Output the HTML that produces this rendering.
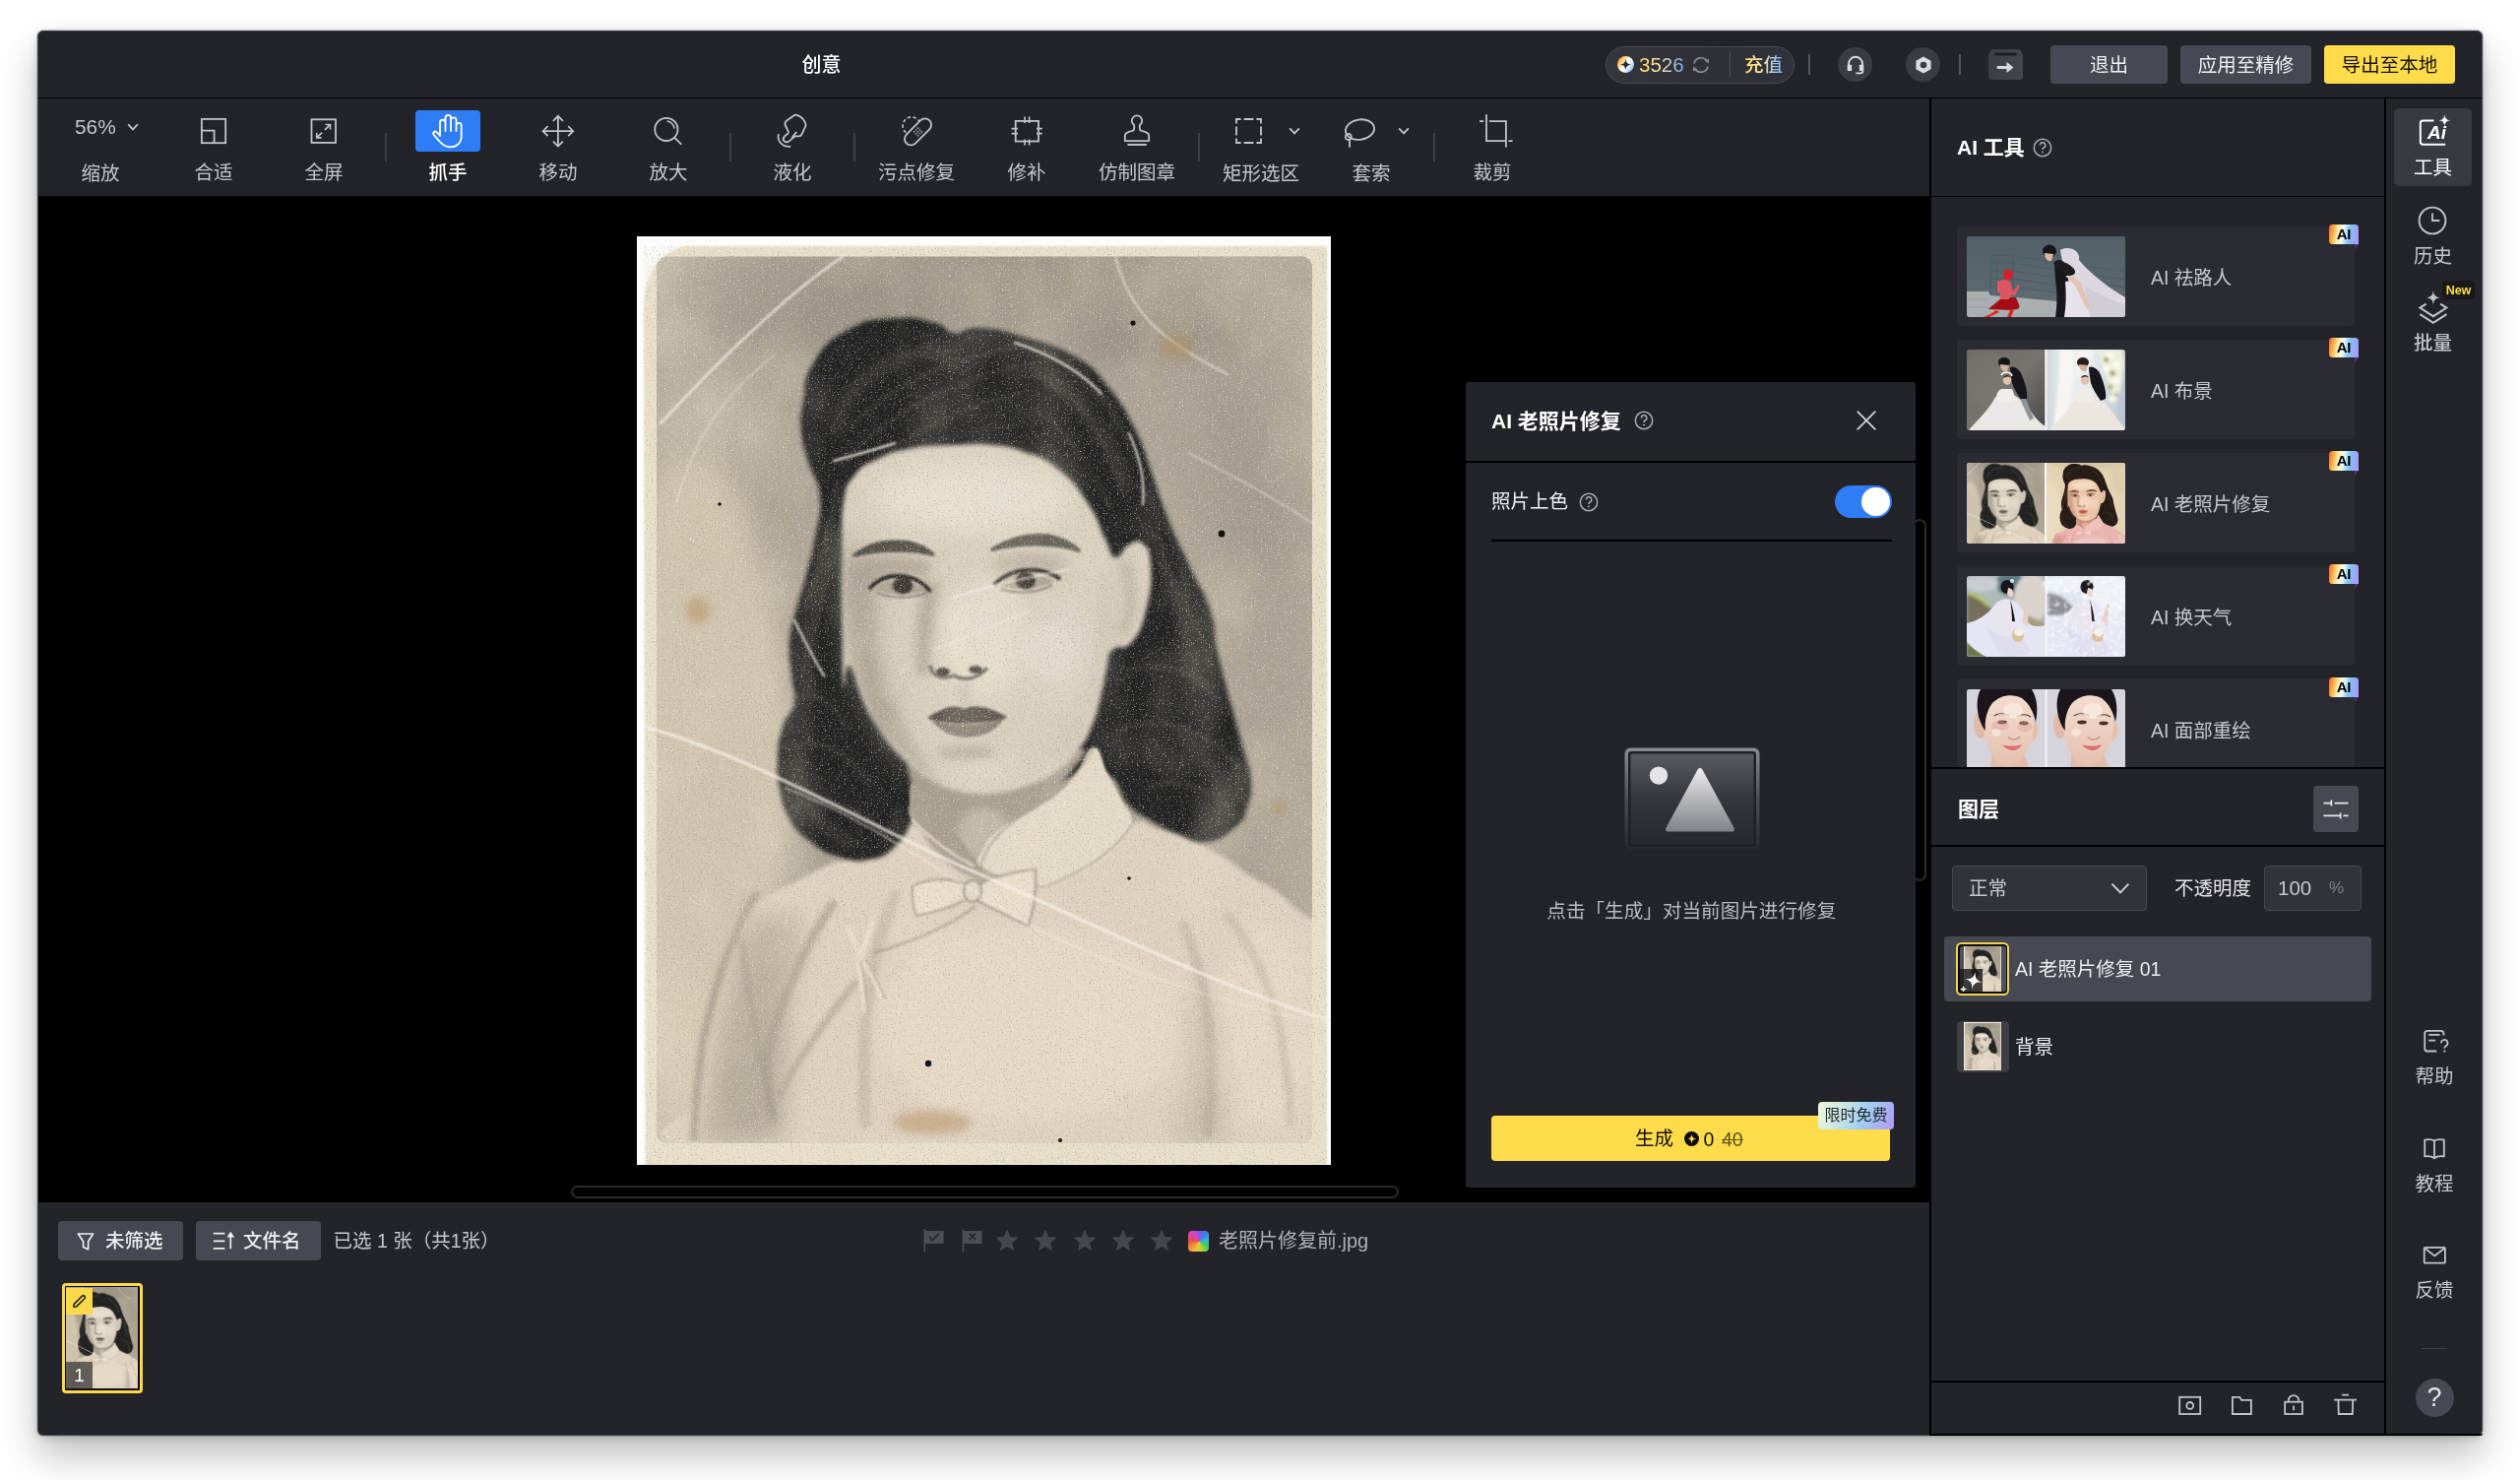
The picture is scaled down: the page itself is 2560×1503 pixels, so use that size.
<!DOCTYPE html>
<html lang="zh-CN"><head><meta charset="utf-8"><title>创意</title>
<style>
html,body{margin:0;padding:0;}
body{width:2560px;height:1503px;background:#fff;position:relative;overflow:hidden;
font-family:"Liberation Sans","Noto Sans CJK SC",sans-serif;}
.a{position:absolute;box-sizing:border-box;}
.t{white-space:nowrap;}
svg{display:block;overflow:visible;}
.gt{background:linear-gradient(90deg,#ffe27a 0%,#fbe9a8 45%,#7fb6ff 100%);-webkit-background-clip:text;background-clip:text;color:transparent !important;}
#root{position:absolute;left:0;top:0;width:2560px;height:1503px;will-change:transform;}
</style></head><body><div id="root">
<svg width="0" height="0" style="position:absolute"><defs>
<filter id="pb1" x="-10%" y="-10%" width="120%" height="120%"><feGaussianBlur stdDeviation="0.9"/></filter>
<filter id="pb2" x="-10%" y="-10%" width="120%" height="120%"><feGaussianBlur stdDeviation="2"/></filter>
<filter id="pb4" x="-20%" y="-20%" width="140%" height="140%"><feGaussianBlur stdDeviation="5"/></filter>
<filter id="pb9" x="-40%" y="-40%" width="180%" height="180%"><feGaussianBlur stdDeviation="13"/></filter>
<filter id="grain" x="0" y="0" width="100%" height="100%"><feTurbulence type="fractalNoise" baseFrequency="0.7" numOctaves="2" seed="7" result="n"/>
<feColorMatrix in="n" type="matrix" values="0 0 0 0 0.95  0 0 0 0 0.92  0 0 0 0 0.85  3.2 3.2 0 0 -3.55"/></filter>
<filter id="graind" x="0" y="0" width="100%" height="100%"><feTurbulence type="fractalNoise" baseFrequency="0.6" numOctaves="2" seed="23" result="n"/>
<feColorMatrix in="n" type="matrix" values="0 0 0 0 0.2  0 0 0 0 0.19  0 0 0 0 0.17  2.4 2.4 0 0 -2.6"/></filter>
<filter id="stain" x="0" y="0" width="100%" height="100%"><feTurbulence type="fractalNoise" baseFrequency="0.011 0.008" numOctaves="3" seed="11" result="n"/>
<feColorMatrix in="n" type="matrix" values="0 0 0 0 0.88  0 0 0 0 0.8  0 0 0 0 0.64  2.2 1.6 0 0 -1.72"/></filter>
<clipPath id="pclip"><rect x="0" y="0" width="705" height="943"/></clipPath>
<clipPath id="pinner"><rect x="20" y="20.5" width="666" height="900.5" rx="11"/></clipPath>
<radialGradient id="vign" cx="0.5" cy="0.46" r="0.66"><stop offset="0.7" stop-color="#e9e0cc" stop-opacity="0"/><stop offset="1" stop-color="#ece3cf" stop-opacity="0.28"/></radialGradient>
</defs></svg>
<svg width="0" height="0" style="position:absolute"><defs>
<filter id="tb1" x="-10%" y="-10%" width="120%" height="120%"><feGaussianBlur stdDeviation="0.6"/></filter>
<filter id="tb2" x="-20%" y="-20%" width="140%" height="140%"><feGaussianBlur stdDeviation="1.5"/></filter>
<filter id="tb4" x="-30%" y="-30%" width="160%" height="160%"><feGaussianBlur stdDeviation="3.5"/></filter>
<filter id="tnoise" x="0" y="0" width="100%" height="100%"><feTurbulence type="fractalNoise" baseFrequency="0.22" numOctaves="2" seed="3"/><feColorMatrix type="matrix" values="0 0 0 0 1  0 0 0 0 1  0 0 0 0 1  2.4 2.4 0 0 -2.3"/></filter>
<linearGradient id="c1wall" x1="0" y1="0" x2="0" y2="1"><stop offset="0" stop-color="#525f66"/><stop offset="1" stop-color="#626d73"/></linearGradient>
<linearGradient id="c2l" x1="0" y1="0" x2="1" y2="1"><stop offset="0" stop-color="#6a6864"/><stop offset="0.5" stop-color="#77746f"/><stop offset="1" stop-color="#4a4946"/></linearGradient>
<linearGradient id="c2r" x1="0" y1="0" x2="1" y2="0"><stop offset="0" stop-color="#cfd6dc"/><stop offset="0.25" stop-color="#eef0f1"/><stop offset="0.6" stop-color="#e3e8ed"/><stop offset="1" stop-color="#b7c2cf"/></linearGradient>
<linearGradient id="skin5" x1="0" y1="0" x2="0" y2="1"><stop offset="0" stop-color="#f3ddd0"/><stop offset="1" stop-color="#e6c0ae"/></linearGradient>
</defs></svg>
<div class="a" style="left:38px;top:31px;width:2484px;height:1427px;background:#23242a;border-radius:6px;box-shadow:inset 0 0 0 1px rgba(120,126,146,.32),0 20px 38px rgba(0,0,0,.26),0 0 2px rgba(0,0,0,.5),0 2px 10px rgba(0,0,0,.15);"></div>
<div class="a t" style="left:534.6px;width:600px;text-align:center;top:50.5px;height:30px;line-height:30px;font-size:20px;color:#fff;font-weight:500;">创意</div>
<div class="a" style="left:39px;top:98.6px;width:2482px;height:1.7px;background:#000;"></div>
<div class="a" style="left:1631px;top:47px;width:192px;height:38px;border-radius:19px;background:linear-gradient(90deg,#34363d,#2e3038 60%,#31323b);border:1.5px solid #484a52;"></div>
<svg class="a" style="left:1641.5px;top:56.0px;" width="19.0" height="19.0" viewBox="-9.5 -9.5 19.0 19.0" fill="none"><defs><linearGradient id="coing" x1="0" y1="0.15" x2="1" y2="0.85">
<stop offset="0" stop-color="#ff8f1f"/><stop offset="0.22" stop-color="#ffc66b"/><stop offset="0.5" stop-color="#ffffff"/><stop offset="0.72" stop-color="#dcebfb"/><stop offset="1" stop-color="#4e9df0"/></linearGradient></defs>
<circle r="8.5" fill="url(#coing)"/>
<path d="M0,-5.6 C0.7,-1.8 1.8,-0.7 5.6,0 C1.8,0.7 0.7,1.8 0,5.6 C-0.7,1.8 -1.8,0.7 -5.6,0 C-1.8,-0.7 -0.7,-1.8 0,-5.6Z" fill="#2a2b33"/></svg>
<div class="a t" style="left:1665px;top:50.5px;height:30px;line-height:30px;font-size:20.5px;color:#ffe27a;font-weight:400;background:linear-gradient(90deg,#ffd964 0%,#fbe7a6 45%,#6fb0ff 100%);-webkit-background-clip:text;background-clip:text;color:transparent;">3526</div>
<svg class="a" style="left:1717.0px;top:55.0px;" width="22" height="22" viewBox="-11.0 -11.0 22 22" fill="none"><path d="M-7,-1.5 A7.1,7.1 0 0 1 6.2,-3.5" stroke="#8b8d93" stroke-width="1.7" fill="none" /><path d="M7,1.5 A7.1,7.1 0 0 1 -6.2,3.5" stroke="#8b8d93" stroke-width="1.7" fill="none" />
<path d="M3.6,-4.2 L8,-6.4 L7.8,-1.4Z" fill="#8b8d93"/><path d="M-3.6,4.2 L-8,6.4 L-7.8,1.4Z" fill="#8b8d93"/></svg>
<div class="a" style="left:1756.5px;top:52px;width:1.5px;height:27px;background:#4a4c54;"></div>
<div class="a t" style="left:1772px;top:50.5px;height:30px;line-height:30px;font-size:19.5px;color:#ffe27a;font-weight:500;background:linear-gradient(90deg,#ffd964 0%,#fbe7a6 45%,#6fb0ff 100%);-webkit-background-clip:text;background-clip:text;color:transparent;">充值</div>
<div class="a" style="left:1837px;top:55px;width:1.5px;height:21px;background:#55575e;"></div>
<div class="a" style="left:1867px;top:48px;width:35px;height:35px;border-radius:50%;background:#3a3c44;"></div>
<svg class="a" style="left:1872.5px;top:53.5px;" width="24" height="24" viewBox="-12.0 -12.0 24 24" fill="none"><path d="M-7,1 V-1.2 A7,7 0 0 1 7,-1.2 V1" stroke="#dcdcdf" stroke-width="1.9" fill="none" />
<rect x="-8.3" y="-0.3" width="4.4" height="6.2" rx="0.6" fill="#dcdcdf"/><rect x="3.9" y="-0.3" width="4.4" height="6.2" rx="0.6" fill="#dcdcdf"/>
<path d="M7.3,5 V6.3 A2,2 0 0 1 5.3,8.3 H0.4" stroke="#dcdcdf" stroke-width="1.7" fill="none" /></svg>
<div class="a" style="left:1936px;top:48px;width:35px;height:35px;border-radius:50%;background:#3a3c44;"></div>
<svg class="a" style="left:1941.5px;top:53.5px;" width="24" height="24" viewBox="-12.0 -12.0 24 24" fill="none"><path fill-rule="evenodd" fill="#dcdcdf" d="M0,-8.6 L7.6,-4.3 V4.3 L0,8.6 L-7.6,4.3 V-4.3Z M3.3,0 A3.3,3.3 0 1 0 -3.3,0 A3.3,3.3 0 1 0 3.3,0Z"/></svg>
<div class="a" style="left:1990px;top:55px;width:1.5px;height:21px;background:#55575e;"></div>
<svg class="a" style="left:2020px;top:50px" width="35" height="31" viewBox="0 0 35 31"><defs><linearGradient id="exg" x1="0" x2="1"><stop offset="0" stop-color="#3d3e44"/><stop offset="1" stop-color="#43454f"/></linearGradient></defs>
<path d="M5,0 H30 Q32,0 33,2 L35,6 V28 Q35,31 32,31 H3 Q0,31 0,28 V6 L2,2 Q3,0 5,0Z" fill="url(#exg)"/>
<rect x="6" y="3.4" width="22.6" height="3.2" rx="1.4" fill="#1f2025"/>
<path d="M8.8,16.9 H18.5 V13 L25.6,18.5 L18.5,24 V20.1 H8.8Z" fill="#d8d8da"/></svg>
<div class="a" style="left:2083px;top:46px;width:119px;height:39px;background:#464852;border-radius:4px;"></div>
<div class="a t" style="left:1842.5px;width:600px;text-align:center;top:50.5px;height:30px;line-height:30px;font-size:19.5px;color:#f0f0f2;font-weight:400;">退出</div>
<div class="a" style="left:2215px;top:46px;width:133px;height:39px;background:#464852;border-radius:4px;"></div>
<div class="a t" style="left:1981.5px;width:600px;text-align:center;top:50.5px;height:30px;line-height:30px;font-size:19.5px;color:#f0f0f2;font-weight:400;">应用至精修</div>
<div class="a" style="left:2361px;top:46px;width:133px;height:39px;background:#ffdc4a;border-radius:4px;"></div>
<div class="a t" style="left:2127.5px;width:600px;text-align:center;top:50.5px;height:30px;line-height:30px;font-size:19.5px;color:#111;font-weight:400;">导出至本地</div>
<div class="a" style="left:391.25px;top:135px;width:1.5px;height:29px;background:#3e4047;"></div>
<div class="a" style="left:741.25px;top:135px;width:1.5px;height:29px;background:#3e4047;"></div>
<div class="a" style="left:867.25px;top:135px;width:1.5px;height:29px;background:#3e4047;"></div>
<div class="a" style="left:1217.25px;top:135px;width:1.5px;height:29px;background:#3e4047;"></div>
<div class="a" style="left:1456.25px;top:135px;width:1.5px;height:29px;background:#3e4047;"></div>
<div class="a" style="left:422px;top:112px;width:66px;height:42px;background:#2f7df6;border-radius:4px;"></div>
<div class="a t" style="left:-198px;width:600px;text-align:center;top:161.3px;height:30px;line-height:30px;font-size:19.5px;color:#c6c7cb;font-weight:400;">缩放</div>
<div class="a t" style="left:-83px;width:600px;text-align:center;top:160.0px;height:30px;line-height:30px;font-size:19.5px;color:#c6c7cb;font-weight:400;">合适</div>
<div class="a t" style="left:29px;width:600px;text-align:center;top:160.0px;height:30px;line-height:30px;font-size:19.5px;color:#c6c7cb;font-weight:400;">全屏</div>
<div class="a t" style="left:155px;width:600px;text-align:center;top:160.0px;height:30px;line-height:30px;font-size:19.5px;color:#fff;font-weight:500;">抓手</div>
<div class="a t" style="left:267px;width:600px;text-align:center;top:160.0px;height:30px;line-height:30px;font-size:19.5px;color:#c6c7cb;font-weight:400;">移动</div>
<div class="a t" style="left:379px;width:600px;text-align:center;top:160.0px;height:30px;line-height:30px;font-size:19.5px;color:#c6c7cb;font-weight:400;">放大</div>
<div class="a t" style="left:505px;width:600px;text-align:center;top:160.0px;height:30px;line-height:30px;font-size:19.5px;color:#c6c7cb;font-weight:400;">液化</div>
<div class="a t" style="left:631px;width:600px;text-align:center;top:160.0px;height:30px;line-height:30px;font-size:19.5px;color:#c6c7cb;font-weight:400;">污点修复</div>
<div class="a t" style="left:743px;width:600px;text-align:center;top:160.0px;height:30px;line-height:30px;font-size:19.5px;color:#c6c7cb;font-weight:400;">修补</div>
<div class="a t" style="left:855px;width:600px;text-align:center;top:160.0px;height:30px;line-height:30px;font-size:19.5px;color:#c6c7cb;font-weight:400;">仿制图章</div>
<div class="a t" style="left:981px;width:600px;text-align:center;top:161.3px;height:30px;line-height:30px;font-size:19.5px;color:#c6c7cb;font-weight:400;">矩形选区</div>
<div class="a t" style="left:1093px;width:600px;text-align:center;top:161.3px;height:30px;line-height:30px;font-size:19.5px;color:#c6c7cb;font-weight:400;">套索</div>
<div class="a t" style="left:1216px;width:600px;text-align:center;top:160.0px;height:30px;line-height:30px;font-size:19.5px;color:#c6c7cb;font-weight:400;">裁剪</div>
<div class="a t" style="left:76px;top:113.5px;height:30px;line-height:30px;font-size:20.8px;color:#c6c7cb;font-weight:400;">56%</div>
<svg class="a" style="left:128.0px;top:124.0px;" width="14" height="10" viewBox="-7.0 -5.0 14 10" fill="none"><path d="M-4.8,-2.6 L0,2.4 L4.8,-2.6" stroke="#c3c4c8" stroke-width="1.8" fill="none" /></svg>
<svg class="a" style="left:202px;top:118px;" width="30" height="30" viewBox="202 118 30 30" fill="none"><rect x="204.9" y="120.9" width="24.3" height="24.3" stroke="#c3c4c8" stroke-width="1.8" fill="none" /><path d="M204.9,132.6 H217.6 V145.2" stroke="#c3c4c8" stroke-width="1.8" fill="none" /></svg>
<svg class="a" style="left:313px;top:118px;" width="31" height="30" viewBox="313 118 31 30" fill="none"><rect x="316.5" y="121.3" width="24.5" height="23.6" stroke="#c3c4c8" stroke-width="1.8" fill="none" />
<path d="M330,131.8 L335.3,126.7 M330.6,126.5 H335.5 V131.4" stroke="#c3c4c8" stroke-width="1.6" fill="none" /><path d="M327.2,134.6 L321.9,139.7 M326.6,139.9 H321.7 V135" stroke="#c3c4c8" stroke-width="1.6" fill="none" /></svg>
<svg class="a" style="left:436px;top:114px;" width="36" height="38" viewBox="436 114 36 38" fill="none"><path d="M447,138 V124.5 A2.75,2.75 0 0 1 452.5,124.5 V133 M452.5,125 V119.6 A2.75,2.75 0 0 1 458,119.6 V133 M458,125 V122.1 A2.75,2.75 0 0 1 463.5,122.1 V133 M463.5,128 V127.4 A2.6,2.6 0 0 1 468.7,127.4 V138.5 C468.7,145.5 463.5,149.3 457.3,149.3 C452.3,149.3 449.3,147 446.3,143.3 L440.7,136.8 C439,134.6 441.8,132.3 443.8,134.3 L447,137.6" stroke="#fff" stroke-width="1.8" fill="none" stroke-linejoin="round" stroke-linecap="round"/></svg>
<svg class="a" style="left:549px;top:115px;" width="36" height="36" viewBox="549 115 36 36" fill="none"><path d="M551.8,133.2 H582 M566.9,117.8 V148.6" stroke="#c3c4c8" stroke-width="1.8" fill="none" />
<path d="M556.6,128.2 L551.6,133.2 L556.6,138.2 M577.2,128.2 L582.2,133.2 L577.2,138.2 M561.9,122.8 L566.9,117.8 L571.9,122.8 M561.9,143.6 L566.9,148.6 L571.9,143.6" stroke="#c3c4c8" stroke-width="1.8" fill="none" /></svg>
<svg class="a" style="left:662px;top:116px;" width="34" height="34" viewBox="662 116 34 34" fill="none"><circle cx="676.9" cy="131.4" r="11.6" stroke="#c3c4c8" stroke-width="1.8" fill="none" /><path d="M677.6,123 A8.2,8.2 0 0 1 685,130.6" stroke="#c3c4c8" stroke-width="1.5" fill="none" />
<path d="M685.4,139.8 L692.2,146.6" stroke="#c3c4c8" stroke-width="1.8" fill="none" /></svg>
<svg class="a" style="left:788px;top:113px;" width="34" height="39" viewBox="788 113 34 39" fill="none"><path d="M808.2,116.6 Q809.8,116.6 813.4,118.8 Q816.2,120.9 817.4,123.4 Q819.2,126.2 818.4,128 L814.5,136.3 Q813.6,138.3 811.3,138.3 L807.6,138.4 L802,143.1 Q798.8,145.6 796.6,143.3 Q794.6,140.9 797,138.5 L800.6,135.3 Q801.2,134.6 800.8,133.6 L797.7,127 Q796.9,124.4 799.2,122.4 L806.6,117.3 Q807.4,116.6 808.2,116.6Z" stroke="#c3c4c8" stroke-width="1.8" fill="none" stroke-linejoin="round"/>
<path d="M804.8,139.6 L808.9,134.4" stroke="#c3c4c8" stroke-width="1.7" fill="none" stroke-linecap="round"/>
<path d="M790.8,136.8 C789.6,142.5 793.5,149 802.4,148.9" stroke="#c3c4c8" stroke-width="1.8" fill="none" stroke-linecap="round"/></svg>
<svg class="a" style="left:914px;top:115px;" width="36" height="36" viewBox="914 115 36 36" fill="none"><g transform="rotate(-45 932.5 133.9)"><rect x="916" y="127.5" width="33" height="12.8" rx="6.4" stroke="#c3c4c8" stroke-width="1.8" fill="none" />
<g fill="#c3c4c8"><circle cx="929.8" cy="131.2" r="0.8"/><circle cx="932.5" cy="131.2" r="0.8"/><circle cx="935.2" cy="131.2" r="0.8"/><circle cx="929.8" cy="133.9" r="0.8"/><circle cx="932.5" cy="133.9" r="0.8"/><circle cx="935.2" cy="133.9" r="0.8"/><circle cx="929.8" cy="136.6" r="0.8"/><circle cx="932.5" cy="136.6" r="0.8"/><circle cx="935.2" cy="136.6" r="0.8"/></g></g>
<path d="M920.3,134.7 A9,9 0 1 1 934.2,123.9" stroke="#c3c4c8" stroke-width="1.6" fill="none" stroke-dasharray="3.4 2.4"/></svg>
<svg class="a" style="left:1025px;top:116px;" width="37" height="34" viewBox="1025 116 37 34" fill="none"><rect x="1031.7" y="122.9" width="23.3" height="20.6" stroke="#c3c4c8" stroke-width="1.8" fill="none" />
<path d="M1041,118.5 V125 M1045.6,118.5 V125 M1041,141.5 V147.6 M1045.6,141.5 V147.6 M1027.6,130.6 H1034 M1027.6,135.6 H1034 M1053,130.6 H1058.8 M1053,135.6 H1058.8" stroke="#c3c4c8" stroke-width="1.6" fill="none" /></svg>
<svg class="a" style="left:1140px;top:114px;" width="30" height="36" viewBox="1140 114 30 36" fill="none"><path d="M1152.2,127 A5.2,5.2 0 1 1 1157.8,127 V130.6 Q1157.8,132.4 1159.6,132.8 Q1167.2,134.2 1167.2,138 V143.1 H1142.8 V138 Q1142.8,134.2 1150.4,132.8 Q1152.2,132.4 1152.2,130.6Z" stroke="#c3c4c8" stroke-width="1.8" fill="none" stroke-linejoin="round"/>
<path d="M1145.4,146.9 H1164.8" stroke="#c3c4c8" stroke-width="2" fill="none" /></svg>
<svg class="a" style="left:1253px;top:118px;" width="31" height="30" viewBox="1253 118 31 30" fill="none"><path d="M1256,125.6 V121 H1260.6 M1263.6,121 H1273.4 M1276.4,121 H1281 V125.6 M1281,128.6 V137.4 M1281,140.4 V145 H1276.4 M1273.4,145 H1263.6 M1260.6,145 H1256 V140.4 M1256,137.4 V128.6" stroke="#c3c4c8" stroke-width="1.8" fill="none" /></svg>
<svg class="a" style="left:1307.5px;top:128.0px;" width="14" height="10" viewBox="-7.0 -5.0 14 10" fill="none"><path d="M-4.8,-2.6 L0,2.4 L4.8,-2.6" stroke="#c3c4c8" stroke-width="1.8" fill="none" /></svg>
<svg class="a" style="left:1363px;top:116px;" width="37" height="36" viewBox="1363 116 37 36" fill="none"><ellipse cx="1381.5" cy="131.6" rx="14.6" ry="10.2" transform="rotate(-9 1381.5 131.6)" stroke="#c3c4c8" stroke-width="1.8" fill="none" />
<circle cx="1369.8" cy="138.9" r="3" stroke="#c3c4c8" stroke-width="1.6" fill="none" /><path d="M1370.6,141.5 Q1371.4,145 1371.1,149.6" stroke="#c3c4c8" stroke-width="1.8" fill="none" /></svg>
<svg class="a" style="left:1419.0px;top:128.0px;" width="14" height="10" viewBox="-7.0 -5.0 14 10" fill="none"><path d="M-4.8,-2.6 L0,2.4 L4.8,-2.6" stroke="#c3c4c8" stroke-width="1.8" fill="none" /></svg>
<svg class="a" style="left:1500px;top:114px;" width="40" height="38" viewBox="1500 114 40 38" fill="none"><path d="M1510,116.3 V143.1 H1529.9 M1512.8,123.1 H1529.9 V149.6 M1503,123.1 H1507.3 M1532.4,143.1 H1536.6" stroke="#c3c4c8" stroke-width="1.8" fill="none" /></svg>
<div class="a" style="left:39px;top:199px;width:1921px;height:1022px;background:#000;"></div>
<svg class="a" style="left:647px;top:240px" width="705" height="943" viewBox="0 0 705 943"><g clip-path="url(#pclip)"><rect width="705" height="943" fill="#fdfcfa"/><path d="M46,10 H701 V943 H9 L7,70 Q8,24 46,10Z" fill="#e8dfc9" filter="url(#pb1)"/><g clip-path="url(#pinner)"><rect x="20" y="20.5" width="666" height="900.5" fill="#aca394"/><g filter="url(#pb9)"><ellipse cx="400" cy="60" rx="380" ry="70" fill="#978e80" opacity="0.7"/><ellipse cx="640" cy="200" rx="60" ry="150" fill="#978e80" opacity="0.35"/><ellipse cx="60" cy="560" rx="95" ry="330" fill="#d3c7af" opacity="0.9"/><ellipse cx="40" cy="860" rx="120" ry="120" fill="#d3c7af" opacity="0.55"/><ellipse cx="70" cy="240" rx="60" ry="100" fill="#d3c7af" opacity="0.25"/></g><rect x="20" y="20.5" width="666" height="900.5" fill="url(#vign)"/><g filter="url(#pb2)"><path d="M279.0,596.0C265.2,593.5 266.3,607.0 250.0,616.0C233.7,625.0 227.8,626.5 214.0,632.0C200.2,637.5 208.5,632.0 195.0,638.0C181.5,644.0 175.5,648.0 160.0,656.0C144.5,664.0 146.3,661.7 133.0,670.0C119.7,678.3 117.3,678.5 107.0,689.0C96.7,699.5 97.3,699.2 92.0,712.0C86.7,724.8 90.0,721.7 86.0,740.0C82.0,758.3 81.0,762.5 76.0,785.0C71.0,807.5 70.0,807.5 66.0,830.0C62.0,852.5 62.3,850.0 60.0,875.0C57.7,900.0 -15.5,908.7 57.0,930.0C129.5,951.3 189.2,957.5 350.0,960.0C510.8,962.5 612.5,1005.0 700.0,940.0C787.5,875.0 703.8,761.5 700.0,700.0C696.2,638.5 692.5,698.3 685.0,694.0C677.5,689.7 679.3,690.5 670.0,683.0C660.7,675.5 659.5,672.3 648.0,664.0C636.5,655.7 638.0,659.0 624.0,650.0C610.0,641.0 608.3,637.8 592.0,628.0C575.7,618.2 574.5,617.5 559.0,611.0C543.5,604.5 544.0,605.8 530.0,602.0C516.0,598.2 518.0,589.0 503.0,596.0C488.0,603.0 490.8,615.2 470.0,630.0C449.2,644.8 445.0,647.5 420.0,655.0C395.0,662.5 390.5,661.3 370.0,660.0C349.5,658.7 354.3,658.5 338.0,650.0C321.7,641.5 319.8,639.5 305.0,626.0C290.2,612.5 292.8,598.5 279.0,596.0Z" fill="#dfd1be"/></g><g filter="url(#pb9)"><path d="M112,690 C96,750 76,840 62,921 L150,921 C150,850 146,770 168,690Z" fill="#a9a08f" opacity="0.75"/><path d="M560,780 C570,830 560,880 550,921 L600,921 C600,860 590,800 575,770Z" fill="#a9a08f" opacity="0.5"/><ellipse cx="400" cy="800" rx="160" ry="100" fill="#ebdecc" opacity="0.6"/><ellipse cx="640" cy="800" rx="50" ry="110" fill="#ebdecc" opacity="0.5"/></g><g filter="url(#pb2)" fill="none" stroke="#a9a08f" stroke-linecap="round"><path d="M121,669 C100,700 82,750 67,818 C62,850 60,880 58,915" stroke-width="8" opacity="0.85"/><path d="M107,718 C112,760 122,820 139,897" stroke-width="8" opacity="0.7"/><path d="M199,678 C170,720 140,790 132,836 C132,860 134,876 137,890" stroke-width="9" opacity="0.7"/><path d="M222,758 C196,790 160,840 146,871" stroke-width="7" opacity="0.6"/><path d="M262,670 C240,720 226,790 232,900" stroke-width="12" opacity="0.35"/><path d="M556,700 C580,760 590,830 580,910" stroke-width="10" opacity="0.4"/><path d="M600,690 C640,740 660,800 664,900" stroke-width="9" opacity="0.3"/></g><g filter="url(#pb2)"><path d="M169.0,167.0C172.0,149.7 167.7,147.0 179.0,129.0C190.3,111.0 193.2,106.5 214.0,95.0C234.8,83.5 239.7,84.8 262.0,83.0C284.3,81.2 288.0,84.2 303.0,88.0C318.0,91.8 310.7,96.7 322.0,98.0C333.3,99.3 330.2,92.0 348.0,93.0C365.8,94.0 368.7,94.7 393.0,102.0C417.3,109.3 423.5,109.2 445.0,122.0C466.5,134.8 463.5,134.0 479.0,153.0C494.5,172.0 495.7,175.5 507.0,198.0C518.3,220.5 515.5,219.7 524.0,243.0C532.5,266.3 531.5,267.7 541.0,291.0C550.5,314.3 551.5,313.5 562.0,336.0C572.5,358.5 576.0,359.5 583.0,381.0C590.0,402.5 584.5,397.0 590.0,422.0C595.5,447.0 598.5,456.5 605.0,481.0C611.5,505.5 611.2,502.2 616.0,520.0C620.8,537.8 623.0,537.0 624.0,552.0C625.0,567.0 624.0,568.0 620.0,580.0C616.0,592.0 618.3,591.2 608.0,600.0C597.7,608.8 594.0,613.5 579.0,615.0C564.0,616.5 562.8,611.8 548.0,606.0C533.2,600.2 532.0,599.0 520.0,592.0C508.0,585.0 512.5,589.8 500.0,578.0C487.5,566.2 495.0,549.5 470.0,545.0C445.0,540.5 442.5,556.2 400.0,560.0C357.5,563.8 329.0,556.2 300.0,560.0C271.0,563.8 289.5,566.0 284.0,575.0C278.5,584.0 283.5,584.7 278.0,596.0C272.5,607.3 272.5,610.7 262.0,620.0C251.5,629.3 250.3,630.5 236.0,633.0C221.7,635.5 220.3,634.8 205.0,630.0C189.7,625.2 187.8,624.0 175.0,614.0C162.2,604.0 161.5,603.5 154.0,590.0C146.5,576.5 147.8,574.3 145.0,560.0C142.2,545.7 142.2,548.5 143.0,533.0C143.8,517.5 143.7,512.8 148.0,498.0C152.3,483.2 157.7,487.0 160.0,474.0C162.3,461.0 158.3,461.5 157.0,446.0C155.7,430.5 153.7,429.0 155.0,412.0C156.3,395.0 157.7,395.3 162.0,378.0C166.3,360.7 167.2,361.3 172.0,343.0C176.8,324.7 177.5,324.8 181.0,305.0C184.5,285.2 187.8,283.0 186.0,264.0C184.2,245.0 178.8,245.5 174.0,229.0C169.2,212.5 168.3,213.5 167.0,198.0C165.7,182.5 166.0,184.3 169.0,167.0Z" fill="#242220"/></g><g filter="url(#pb4)" opacity="0.42" fill="none" stroke="#55514b"><path d="M200,200 C210,150 260,112 320,118" stroke-width="14"/><path d="M396,128 C440,150 478,200 500,260" stroke-width="13"/><path d="M524,300 C545,360 565,410 572,460" stroke-width="12"/><path d="M548,500 C584,530 602,560 590,596" stroke-width="12"/><path d="M190,330 C176,380 170,430 178,470" stroke-width="11"/><path d="M166,520 C160,560 180,600 220,618" stroke-width="11"/></g><g filter="url(#pb2)" opacity="0.38" fill="none" stroke="#55514b" stroke-linecap="round"><path d="M388,112 C340,120 270,140 214,196" stroke-width="4"/><path d="M388,132 C330,146 262,172 206,232" stroke-width="4"/><path d="M390,160 C340,170 280,196 232,236" stroke-width="3.5"/><path d="M392,190 C350,196 300,206 262,222" stroke-width="3"/><path d="M402,112 C450,128 486,170 506,226" stroke-width="4"/><path d="M404,140 C444,160 476,200 494,262" stroke-width="4"/><path d="M406,176 C436,196 462,232 480,276" stroke-width="3.5"/><path d="M508,250 C540,290 556,330 560,372" stroke-width="4"/><path d="M530,330 C548,352 574,400 582,440" stroke-width="4"/><path d="M500,440 C530,430 566,440 590,470" stroke-width="5"/><path d="M494,500 C530,486 580,500 612,540" stroke-width="5"/><path d="M520,560 C550,548 590,560 606,590" stroke-width="5"/><path d="M204,250 C196,300 186,340 170,380" stroke-width="4"/><path d="M196,330 C186,380 176,420 166,450" stroke-width="4"/><path d="M160,470 C176,460 200,470 214,500" stroke-width="5"/><path d="M150,520 C176,506 214,520 236,556" stroke-width="5"/><path d="M160,580 C190,566 230,580 254,610" stroke-width="5"/></g><g filter="url(#pb2)"><path d="M283.0,530.0C270.5,532.5 275.7,545.0 280.0,560.0C284.3,575.0 289.5,575.5 300.0,590.0C310.5,604.5 311.2,605.5 322.0,618.0C332.8,630.5 333.0,641.5 343.0,640.0C353.0,638.5 350.2,624.5 362.0,612.0C373.8,599.5 376.5,601.0 390.0,590.0C403.5,579.0 403.5,579.3 416.0,568.0C428.5,556.7 431.0,557.0 440.0,545.0C449.0,533.0 462.0,521.3 452.0,520.0C442.0,518.7 430.5,532.5 400.0,540.0C369.5,547.5 359.3,552.5 330.0,550.0C300.7,547.5 295.5,527.5 283.0,530.0Z" fill="#a89e8f"/></g><g filter="url(#pb4)"><ellipse cx="352" cy="606" rx="26" ry="26" fill="#d8cfbf" opacity="0.55"/></g><g filter="url(#pb1)"><path d="M279.0,556.0C276.2,559.3 277.0,566.0 277.0,575.0C277.0,584.0 273.2,582.7 279.0,592.0C284.8,601.3 289.2,603.0 300.0,612.0C310.8,621.0 311.2,621.0 322.0,628.0C332.8,635.0 339.5,641.5 343.0,640.0C346.5,638.5 342.3,632.0 336.0,622.0C329.7,612.0 327.0,611.0 318.0,600.0C309.0,589.0 307.5,587.5 300.0,578.0C292.5,568.5 293.3,567.5 288.0,562.0C282.7,556.5 281.8,552.7 279.0,556.0Z" fill="#a9a08f"/><path d="M464.0,519.0C472.0,518.7 471.0,531.7 478.0,545.0C485.0,558.3 485.7,559.0 492.0,572.0C498.3,585.0 504.0,585.0 503.0,597.0C502.0,609.0 498.8,608.7 488.0,620.0C477.2,631.3 478.3,632.0 460.0,642.0C441.7,652.0 435.0,657.0 415.0,660.0C395.0,663.0 396.5,659.0 380.0,654.0C363.5,649.0 356.0,648.0 349.0,640.0C342.0,632.0 348.2,630.5 352.0,622.0C355.8,613.5 355.0,614.0 364.0,606.0C373.0,598.0 376.5,597.0 388.0,590.0C399.5,583.0 400.0,584.0 410.0,578.0C420.0,572.0 419.0,574.0 428.0,566.0C437.0,558.0 437.0,557.8 446.0,546.0C455.0,534.2 456.0,519.3 464.0,519.0Z" fill="#e4dac8"/><path d="M464,519 C450,548 420,572 392,588 C370,602 354,620 349,640" stroke="#a9a08f" stroke-width="2.5" fill="none" opacity="0.7"/><path d="M503,597 C488,622 456,645 415,660 C392,662 368,652 349,640" stroke="#a9a08f" stroke-width="2.5" fill="none" opacity="0.6"/><path d="M279,592 C298,612 320,628 343,640" stroke="#ebdecc" stroke-width="3" fill="none" opacity="0.8"/></g><g filter="url(#pb1)"><path d="M338,660 C318,650 296,652 280,660 C279,670 281,682 284,690 C304,686 322,680 338,672Z M344,660 C362,650 388,644 405,643 C406,662 403,684 398,700 C380,692 360,682 344,674Z" fill="#ebdecc" stroke="#a9a08f" stroke-width="2.5"/><ellipse cx="341" cy="665" rx="9" ry="11" fill="#e4dac8" stroke="#a9a08f" stroke-width="2.5"/><path d="M224,734 C228,752 230,770 231,788 M228,732 C238,748 244,760 249,773 M214,700 L226,730 M240,694 L228,730" stroke="#ebdecc" stroke-width="5" fill="none" opacity="0.95"/><path d="M224,734 C228,752 230,770 231,788 M228,732 C238,748 244,760 249,773" stroke="#a9a08f" stroke-width="1.5" fill="none" opacity="0.8" transform="translate(3,1)"/><path d="M344,680 C320,700 280,716 240,728" stroke="#a9a08f" stroke-width="3" fill="none" opacity="0.75"/></g><g filter="url(#pb2)"><path d="M210.0,457.0C208.1,446.7 209.0,427.8 208.6,395.0C208.2,362.2 208.2,357.0 208.6,326.0C209.0,295.0 206.9,291.8 210.0,271.0C213.1,250.2 212.2,254.3 221.0,243.0C229.8,231.7 230.5,232.9 245.0,226.0C259.5,219.1 260.0,219.0 279.0,215.5C298.0,212.0 300.2,212.9 321.0,212.0C341.8,211.1 344.0,210.2 362.0,212.0C380.0,213.8 376.7,213.0 393.0,219.0C409.3,225.0 410.7,223.0 427.0,236.0C443.3,249.0 445.7,253.0 458.0,271.0C470.3,289.0 469.0,294.2 476.0,308.0C483.0,321.8 480.0,324.7 486.0,326.0C492.0,327.3 493.0,316.5 500.0,313.0C507.0,309.5 508.5,307.0 514.0,312.0C519.5,317.0 521.0,316.7 522.0,333.0C523.0,349.3 522.8,357.2 518.0,377.0C513.2,396.8 511.8,401.2 503.0,412.0C494.2,422.8 489.5,413.0 483.0,420.0C476.5,427.0 479.8,429.0 477.0,440.0C474.2,451.0 475.8,449.5 472.0,464.0C468.2,478.5 468.3,483.0 462.0,498.0C455.7,513.0 455.5,513.0 447.0,524.0C438.5,535.0 439.3,534.0 428.0,542.0C416.7,550.0 415.5,550.5 402.0,556.0C388.5,561.5 387.3,561.5 374.0,564.0C360.7,566.5 362.0,566.5 349.0,566.0C336.0,565.5 334.8,565.5 322.0,562.0C309.2,558.5 308.3,557.5 298.0,552.0C287.7,546.5 290.0,547.5 281.0,540.0C272.0,532.5 270.8,532.0 262.0,522.0C253.2,512.0 253.8,512.0 246.0,500.0C238.2,488.0 238.5,490.0 231.0,474.0C223.5,458.0 221.3,440.3 216.0,436.0C210.7,431.7 211.9,467.3 210.0,457.0Z" fill="#d8cfbf"/></g><g filter="url(#pb9)"><path d="M209,300 C206,400 226,490 290,560 C256,510 244,420 244,330Z" fill="#a89e8f" opacity="0.8"/><path d="M486,330 C486,420 466,500 410,556 C440,520 462,470 468,400Z" fill="#a89e8f" opacity="0.45"/><ellipse cx="340" cy="265" rx="100" ry="36" fill="#e9e1d2" opacity="0.9"/><ellipse cx="352" cy="410" rx="46" ry="60" fill="#e9e1d2" opacity="0.75"/><ellipse cx="440" cy="420" rx="30" ry="50" fill="#e9e1d2" opacity="0.45"/><ellipse cx="350" cy="540" rx="34" ry="14" fill="#e9e1d2" opacity="0.6"/></g><g filter="url(#pb4)"><path d="M300,350 C292,390 288,420 292,446" stroke="#a89e8f" stroke-width="16" fill="none" opacity="0.7"/><ellipse cx="262" cy="340" rx="36" ry="14" fill="#a89e8f" opacity="0.45"/><ellipse cx="400" cy="336" rx="40" ry="13" fill="#a89e8f" opacity="0.35"/><ellipse cx="334" cy="524" rx="30" ry="7" fill="#a89e8f" opacity="0.6"/><path d="M494,330 C504,350 504,380 494,404" stroke="#a89e8f" stroke-width="7" fill="none" opacity="0.6"/></g><g filter="url(#pb4)"><path d="M214,330 C210,400 224,470 262,524 C244,470 236,400 240,340Z" fill="#a89e8f" opacity="0.55"/><path d="M236,470 C250,510 276,540 310,560 C290,530 270,500 262,470Z" fill="#a89e8f" opacity="0.45"/><ellipse cx="266" cy="334" rx="34" ry="10" fill="#a89e8f" opacity="0.45"/><ellipse cx="398" cy="330" rx="38" ry="10" fill="#a89e8f" opacity="0.35"/><path d="M333,455 L334,476" stroke="#a89e8f" stroke-width="8" opacity="0.45"/><ellipse cx="326" cy="405" rx="10" ry="34" fill="#e9e1d2" opacity="0.7"/><ellipse cx="416" cy="420" rx="26" ry="30" fill="#e9e1d2" opacity="0.4"/></g><g filter="url(#pb1)"><path d="M221,324 C236,312 256,308 276,311 C286,313 294,317 301,323 C280,318 248,317 221,324Z" fill="#4a4540" stroke="#4a4540" stroke-width="3.5" stroke-linejoin="round" opacity="0.9"/><path d="M361,318 C380,306 400,302 418,304 C432,307 442,312 449,319 C424,311 392,311 361,318Z" fill="#4a4540" stroke="#4a4540" stroke-width="3.5" stroke-linejoin="round" opacity="0.9"/><path d="M242,358 C254,347 280,346 294,360 C280,365 256,365 242,358Z" fill="#a89e8f" opacity="0.9"/><path d="M368,354 C382,343 408,341 424,350 C408,360 384,360 368,354Z" fill="#a89e8f" opacity="0.9"/><ellipse cx="270" cy="355" rx="10.5" ry="8.5" fill="#3a3531"/><ellipse cx="395" cy="350" rx="10.5" ry="8.5" fill="#3a3531"/><path d="M236,358 C252,340 282,340 298,361" stroke="#2a2725" stroke-width="4" fill="none"/><path d="M363,354 C380,336 410,334 430,348" stroke="#2a2725" stroke-width="4" fill="none"/><path d="M244,362 C258,368 280,368 294,362 M370,358 C386,364 408,362 422,354" stroke="#4a4540" stroke-width="1.6" fill="none" opacity="0.7"/><path d="M298,436 C300,448 312,450 322,446 C332,452 346,450 356,438" stroke="#4a4540" stroke-width="3.5" fill="none" opacity="0.75"/><ellipse cx="311" cy="442" rx="7" ry="4" fill="#2a2725" opacity="0.85"/><ellipse cx="344" cy="440" rx="7" ry="4" fill="#2a2725" opacity="0.8"/><path d="M295,489 C310,479 322,474 333,480 C344,474 358,478 376,488 C356,496 316,497 295,489Z" fill="#5a524d"/><path d="M299,491 C316,515 356,515 373,490 C350,497 320,498 299,491Z" fill="#8a7f76"/><path d="M297,489 C320,495 350,495 375,488" stroke="#5a524d" stroke-width="2.5" fill="none"/></g></g><rect x="7" y="10" width="694" height="933" filter="url(#stain)" opacity="0.22"/><rect x="7" y="10" width="694" height="933" filter="url(#grain)" opacity="0.5"/><rect x="7" y="10" width="694" height="933" filter="url(#graind)" opacity="0.35"/><g stroke="#f8f3e8" fill="none" stroke-linecap="round" filter="url(#pb1)"><path d="M8,498 C120,530 220,590 330,640 C450,690 580,760 704,796" stroke-width="3" opacity="0.8"/><path d="M150,560 C230,590 300,640 400,700 C500,750 600,780 700,800" stroke-width="1.6" opacity="0.55"/><path d="M24,190 C80,130 150,60 210,20" stroke-width="2.6" opacity="0.75"/><path d="M40,270 C60,200 90,160 140,120" stroke-width="1.6" opacity="0.5"/><path d="M486,20 C500,80 540,110 600,140" stroke-width="2" opacity="0.6"/><path d="M320,368 C350,356 400,346 440,338" stroke-width="2.2" opacity="0.7"/><path d="M200,228 C230,220 250,214 262,210" stroke-width="2.4" opacity="0.8"/><path d="M384,108 C420,120 450,136 472,160 M500,200 C512,226 516,250 514,272" stroke-width="2.4" opacity="0.75"/><path d="M160,390 C170,410 180,430 190,446" stroke-width="2.6" opacity="0.7"/><path d="M560,220 C620,250 670,280 700,300" stroke-width="1.5" opacity="0.5"/><path d="M300,420 C330,410 360,396 400,380" stroke-width="1.6" opacity="0.5"/></g><g fill="#15130f"><circle cx="504" cy="88" r="2.6"/><circle cx="594" cy="302" r="3.4"/><circle cx="296" cy="840" r="3.2"/><circle cx="84" cy="272" r="1.8"/><circle cx="430" cy="918" r="2"/><circle cx="500" cy="652" r="1.8"/></g><g fill="#b08d5e" opacity="0.5" filter="url(#pb4)"><ellipse cx="548" cy="112" rx="16" ry="12"/><ellipse cx="62" cy="380" rx="12" ry="14"/><ellipse cx="300" cy="900" rx="40" ry="12"/><ellipse cx="652" cy="580" rx="7" ry="9"/></g></g></svg>
<div class="a" style="left:579.8px;top:1204px;width:841.5px;height:13.2px;border:2px solid #2a2a2b;border-radius:7px;"></div>
<div class="a" style="left:1943.4px;top:527px;width:13.3px;height:368px;border:2px solid #2a2a2b;border-radius:7px;"></div>
<div class="a" style="left:1960px;top:100px;width:2px;height:1358px;background:#000;"></div>
<div class="a" style="left:1489px;top:388px;width:456.5px;height:817.5px;background:#23242a;border-radius:3px;"></div>
<div class="a t" style="left:1515px;top:413.0px;height:30px;line-height:30px;font-size:21px;color:#fff;font-weight:700;">AI 老照片修复</div>
<svg class="a" style="left:1657.5px;top:415.0px;" width="24" height="24" viewBox="-12.0 -12.0 24 24" fill="none"><circle r="8.7" stroke="#a9abb0" stroke-width="1.5" fill="none" /><path d="M-2.6,-2.6 A2.7,2.7 0 1 1 0.9,0 Q0,0.5 0,2" stroke="#a9abb0" stroke-width="1.5" fill="none" /><circle cx="0" cy="4.5" r="1" fill="#a9abb0"/></svg>
<svg class="a" style="left:1884.0px;top:415.0px;" width="24" height="24" viewBox="-12.0 -12.0 24 24" fill="none"><path d="M-9.3,-9.3 L9.3,9.3 M9.3,-9.3 L-9.3,9.3" stroke="#d6d6d9" stroke-width="1.7" fill="none" /></svg>
<div class="a" style="left:1489px;top:467.5px;width:456.5px;height:2px;background:#000;"></div>
<div class="a t" style="left:1515px;top:494.0px;height:30px;line-height:30px;font-size:19.5px;color:#f2f2f4;font-weight:400;">照片上色</div>
<svg class="a" style="left:1601.5px;top:497.5px;" width="24" height="24" viewBox="-12.0 -12.0 24 24" fill="none"><circle r="8.7" stroke="#a9abb0" stroke-width="1.5" fill="none" /><path d="M-2.6,-2.6 A2.7,2.7 0 1 1 0.9,0 Q0,0.5 0,2" stroke="#a9abb0" stroke-width="1.5" fill="none" /><circle cx="0" cy="4.5" r="1" fill="#a9abb0"/></svg>
<div class="a" style="left:1863.5px;top:493px;width:58.5px;height:32.5px;background:#2f7df6;border-radius:17px;"></div>
<div class="a" style="left:1891px;top:495px;width:28.5px;height:28.5px;background:#fff;border-radius:50%;"></div>
<div class="a" style="left:1515px;top:548px;width:407px;height:2px;background:#000;"></div>
<svg class="a" style="left:1650px;top:759px" width="138" height="105" viewBox="0 0 138 105"><defs>
<linearGradient id="phb" x1="0" y1="0" x2="0" y2="1"><stop offset="0" stop-color="#8c8d92"/><stop offset="0.5" stop-color="#4c4d53"/><stop offset="1" stop-color="#26272d"/></linearGradient>
<linearGradient id="phf" x1="0" y1="0" x2="0" y2="1"><stop offset="0" stop-color="#5a5b61"/><stop offset="0.5" stop-color="#35363c"/><stop offset="1" stop-color="#27282e"/></linearGradient>
<linearGradient id="pht" x1="0" y1="0" x2="0" y2="1"><stop offset="0" stop-color="#ececee"/><stop offset="1" stop-color="#808186"/></linearGradient></defs>
<rect x="0.5" y="0.5" width="137" height="104" rx="6" fill="url(#phb)"/>
<rect x="4" y="4" width="130" height="97" rx="3" fill="#202126"/>
<rect x="6.5" y="6.5" width="125" height="92" rx="1.5" fill="url(#phf)"/>
<circle cx="35" cy="28.6" r="9.2" fill="#e4e4e6"/>
<path d="M74.6,22.6 Q77,19 79.4,22.6 L111.4,81.6 Q113,85.6 109,85.6 H45 Q41,85.6 42.6,81.6Z" fill="url(#pht)"/></svg>
<div class="a t" style="left:1418.3px;width:600px;text-align:center;top:909.6px;height:30px;line-height:30px;font-size:19.6px;color:#b9babe;font-weight:400;">点击「生成」对当前图片进行修复</div>
<div class="a" style="left:1515px;top:1133px;width:404.5px;height:46px;background:#ffdc4a;border-radius:4px;"></div>
<div class="a t" style="left:1661px;top:1141.0px;height:30px;line-height:30px;font-size:19.5px;color:#111;font-weight:400;">生成</div>
<svg class="a" style="left:1709.9px;top:1148.0px;" width="17.0" height="17.0" viewBox="-8.5 -8.5 17.0 17.0" fill="none"><circle r="7.5" fill="#0c0c0c"/>
<path d="M0,-4.8 C0.6,-1.5 1.5,-0.6 4.8,0 C1.5,0.6 0.6,1.5 0,4.8 C-0.6,1.5 -1.5,-0.6 -4.8,0 C-1.5,-0.6 -0.6,-1.5 0,-4.8Z" fill="#ffdc4a"/></svg>
<div class="a t" style="left:1730.5px;top:1141.5px;height:30px;line-height:30px;font-size:19.5px;color:#111;font-weight:400;">0</div>
<div class="a t" style="left:1749px;top:1141.5px;height:30px;line-height:30px;font-size:19.5px;color:#5f5320;font-weight:400;text-decoration:line-through;">40</div>
<div class="a" style="left:1847px;top:1118.5px;width:77px;height:28px;border-radius:4px;background:linear-gradient(115deg,#eef6dc 0%,#d5ecdf 25%,#9fcdf2 60%,#b09af4 100%);"></div>
<div class="a t" style="left:1585.5px;width:600px;text-align:center;top:1117.5px;height:30px;line-height:30px;font-size:16px;color:#23272e;font-weight:400;">限时免费</div>
<div class="a t" style="left:1988px;top:135.0px;height:30px;line-height:30px;font-size:21px;color:#fff;font-weight:700;">AI 工具</div>
<svg class="a" style="left:2063.0px;top:138.0px;" width="24" height="24" viewBox="-12.0 -12.0 24 24" fill="none"><circle r="8.7" stroke="#a9abb0" stroke-width="1.5" fill="none" /><path d="M-2.6,-2.6 A2.7,2.7 0 1 1 0.9,0 Q0,0.5 0,2" stroke="#a9abb0" stroke-width="1.5" fill="none" /><circle cx="0" cy="4.5" r="1" fill="#a9abb0"/></svg>
<div class="a" style="left:1962px;top:199px;width:460px;height:1.4px;background:#000;"></div>
<div class="a" style="left:1962px;top:200px;width:460px;height:579px;overflow:hidden;"><div class="a" style="left:26px;top:30px;width:404px;height:101px;background:#2b2c33;border-radius:4px;"></div>
<div class="a" style="left:36px;top:40px;width:161px;height:82px;border-radius:3px;overflow:hidden;background:#888;"><svg class="a" style="left:0;top:0" width="161" height="82" viewBox="0 0 161 82"><rect width="161" height="82" fill="url(#c1wall)"/>
<g stroke="#4c6068" stroke-width="1.6" fill="none" filter="url(#tb1)"><path d="M24,60 V21 Q24,19.5 26,19.5 H44 L161,36"/><path d="M31,60 V23 M47,62 V21"/><path d="M24,27 H46 L161,44 M24,35 H46 L161,52 M24,43 H46 L161,60 M24,51 H46 L161,66"/></g>
<g filter="url(#tb1)"><path d="M0,56 H22 L24,60 L50,62 L92,66 L161,72 V82 H0Z" fill="#a9aeb1"/><path d="M0,64 H22 M0,72 H30" stroke="#9aa0a3" stroke-width="1"/></g>
<g filter="url(#tb1)"><path d="M95,14 C103,9 116,14 114,24 C122,34 140,50 161,62 V82 H118 C112,70 104,50 100,34 C98,28 96,22 95,14Z" fill="#ddd7e2"/>
<path d="M120,50 C132,58 150,66 161,70 V82 H126Z" fill="#c9c7d2" opacity="0.7"/>
<path d="M89,26 C94,22 98,24 101,30 L104,50 C104,60 102,72 100,82 H90 C92,70 92,56 90,44Z" fill="#17191c"/>
<path d="M100,46 C106,44 112,48 114,54 C118,62 122,72 125,82 H99 C101,70 101,58 100,46Z" fill="#e7e2ea"/>
<ellipse cx="84" cy="15" rx="7" ry="6.5" fill="#16181b"/><path d="M79,17 C79,22 82,26 86,25 L88,18Z" fill="#d9b9a6"/>
<path d="M88,27 C94,24 102,26 108,32 C112,36 110,40 104,40 C98,38 92,34 88,27Z" fill="#1d1a1b"/>
<path d="M100,40 C108,40 112,42 116,48 L126,72 L122,74 L110,50Z" fill="#e2c4b4"/></g>
<g filter="url(#tb1)"><path d="M35,68 L50,60 L58,74 L52,75 L48,82 H40 L43,75 L24,76 L20,82 H14 L22,74Z" fill="#ffffff" opacity="0.0"/>
<path d="M22,74 C26,70 32,66 36,62 L50,62 C52,68 56,72 51,74 L44,75Z" fill="#a30f17"/>
<path d="M33,46 C36,43 43,43 45,48 L47,56 L52,49 L54,51 L49,60 L44,60 L43,64 L34,64 Z" fill="#dc5562"/>
<ellipse cx="42" cy="39" rx="5" ry="5.6" fill="#d5222c"/><path d="M31,44 L35,48 L33,58 L31,56Z" fill="#e05a66"/>
<path d="M30,75 L24,79 L17,82 H23 L33,77Z M44,75 L41,82 H45 L48,75Z" fill="#e1261f"/></g></svg></div>
<div class="a t" style="left:223px;top:67.0px;height:30px;line-height:30px;font-size:19.5px;color:#c6c7cb;font-weight:400;">AI 祛路人</div>
<div class="a" style="left:404px;top:28px;width:30px;height:20px;border-radius:3.5px 3.5px 0 3.5px;background:linear-gradient(100deg,#ff5548 0%,#ffa23a 13%,#fff0ae 32%,#f0fbf6 47%,#82c6f2 66%,#97a9f8 84%,#b793fc 100%);"></div>
<div class="a t" style="left:404px;top:28px;width:30px;height:20px;line-height:20.5px;text-align:center;font-size:15px;font-weight:700;color:#000;letter-spacing:-0.2px;">AI</div>
<svg class="a" style="left:430px;top:48px" width="4" height="6" viewBox="0 0 4 6"><path d="M0,0 H4 L0,5.6Z" fill="#43366e"/></svg>
<div class="a" style="left:26px;top:145px;width:404px;height:101px;background:#2b2c33;border-radius:4px;"></div>
<div class="a" style="left:36px;top:155px;width:161px;height:82px;border-radius:3px;overflow:hidden;background:#888;"><svg class="a" style="left:0;top:0" width="161" height="82" viewBox="0 0 161 82"><rect width="80" height="82" fill="url(#c2l)"/><ellipse cx="20" cy="30" rx="30" ry="30" fill="#7d7a75" opacity="0.5" filter="url(#tb4)"/>
<rect x="81" width="80" height="82" fill="url(#c2r)"/>
<g filter="url(#tb2)"><path d="M94,0 H108 C110,20 106,50 98,82 H88 C92,50 95,20 94,0Z" fill="#f7f6f3"/><path d="M112,0 H130 C128,14 118,26 110,30Z" fill="#f3f3f1"/>
<path d="M132,0 C134,10 140,24 146,40 C150,50 150,58 148,62 C158,40 162,20 158,0Z" fill="#eeeedd"/>
<g fill="#9caf6e"><circle cx="142" cy="10" r="3"/><circle cx="148" cy="24" r="3"/><circle cx="146" cy="38" r="2.4"/><circle cx="152" cy="46" r="2"/></g>
<g fill="#fbfaee"><circle cx="146" cy="6" r="4"/><circle cx="152" cy="16" r="4"/><circle cx="142" cy="20" r="3.4"/><circle cx="152" cy="32" r="3.6"/><circle cx="147" cy="50" r="3"/></g></g>
<g filter="url(#tb1)">
<path d="M2,82 C10,72 22,62 28,50 C30,46 36,42 42,44 C52,46 60,56 66,64 C70,70 76,76 80,78 V82Z" fill="#e9e8e4"/>
<path d="M30,50 C30,44 33,40 36,40 L46,40 C48,44 49,48 48,52 C42,56 34,54 30,50Z" fill="#efeeea"/>
<path d="M44,18 C48,16 54,20 56,26 C60,36 62,44 61,50 L56,52 C52,46 48,40 46,34 C45,28 44,22 44,18Z" fill="#17181a"/>
<path d="M54,50 L60,50 L68,70 L64,72Z" fill="#8f9498"/>
<ellipse cx="38" cy="13" rx="6" ry="5" fill="#141416"/><path d="M34,15 C34,20 37,23 41,22 L43,16Z" fill="#d3b19c"/>
<ellipse cx="41" cy="31" rx="4.2" ry="4.8" fill="#e2c3b0"/><path d="M37,29 C38,25 44,25 45,29 C43,27 40,27 37,29Z" fill="#2a2422"/><path d="M35,26 C37,22 45,22 46,27" stroke="#f5f3ef" stroke-width="1.6" fill="none"/>
</g>
<g filter="url(#tb1)">
<path d="M84,82 C92,72 104,62 110,50 C112,46 118,42 124,44 C134,46 142,56 150,66 C154,72 158,78 161,80 V82Z" fill="#ece7de"/>
<path d="M110,50 C110,44 113,40 116,40 L126,40 C128,44 129,48 128,52 C122,56 114,54 110,50Z" fill="#f1ede6"/>
<path d="M124,18 C128,16 134,20 136,26 C140,36 142,44 141,50 L136,52 C132,46 128,40 126,34 C125,28 124,22 124,18Z" fill="#17181a"/>
<ellipse cx="118" cy="13" rx="6" ry="5" fill="#2a1f1b"/><path d="M114,15 C114,20 117,23 121,22 L123,16Z" fill="#d3b19c"/>
<ellipse cx="120" cy="31" rx="4.2" ry="4.8" fill="#e2c3b0"/><path d="M116,29 C117,25 123,25 124,29 C122,27 119,27 116,29Z" fill="#2a2422"/>
</g>
<rect x="79.3" width="2.2" height="82" fill="#f6f6f6"/></svg></div>
<div class="a t" style="left:223px;top:182.0px;height:30px;line-height:30px;font-size:19.5px;color:#c6c7cb;font-weight:400;">AI 布景</div>
<div class="a" style="left:404px;top:143px;width:30px;height:20px;border-radius:3.5px 3.5px 0 3.5px;background:linear-gradient(100deg,#ff5548 0%,#ffa23a 13%,#fff0ae 32%,#f0fbf6 47%,#82c6f2 66%,#97a9f8 84%,#b793fc 100%);"></div>
<div class="a t" style="left:404px;top:143px;width:30px;height:20px;line-height:20.5px;text-align:center;font-size:15px;font-weight:700;color:#000;letter-spacing:-0.2px;">AI</div>
<svg class="a" style="left:430px;top:163px" width="4" height="6" viewBox="0 0 4 6"><path d="M0,0 H4 L0,5.6Z" fill="#43366e"/></svg>
<div class="a" style="left:26px;top:260px;width:404px;height:101px;background:#2b2c33;border-radius:4px;"></div>
<div class="a" style="left:36px;top:270px;width:161px;height:82px;border-radius:3px;overflow:hidden;background:#bbb;"><svg class="a" style="left:0px;top:0px;overflow:hidden;" width="80" height="82" viewBox="32 75 654 685" preserveAspectRatio="none"><g clip-path="url(#pclip)"><rect width="705" height="943" fill="#fdfcfa"/><path d="M46,10 H701 V943 H9 L7,70 Q8,24 46,10Z" fill="#e8dfc9" filter="url(#pb1)"/><g clip-path="url(#pinner)"><rect x="20" y="20.5" width="666" height="900.5" fill="#aca394"/><g filter="url(#pb9)"><ellipse cx="400" cy="60" rx="380" ry="70" fill="#978e80" opacity="0.7"/><ellipse cx="640" cy="200" rx="60" ry="150" fill="#978e80" opacity="0.35"/><ellipse cx="60" cy="560" rx="95" ry="330" fill="#d3c7af" opacity="0.9"/><ellipse cx="40" cy="860" rx="120" ry="120" fill="#d3c7af" opacity="0.55"/><ellipse cx="70" cy="240" rx="60" ry="100" fill="#d3c7af" opacity="0.25"/></g><rect x="20" y="20.5" width="666" height="900.5" fill="url(#vign)"/><g filter="url(#pb2)"><path d="M279.0,596.0C265.2,593.5 266.3,607.0 250.0,616.0C233.7,625.0 227.8,626.5 214.0,632.0C200.2,637.5 208.5,632.0 195.0,638.0C181.5,644.0 175.5,648.0 160.0,656.0C144.5,664.0 146.3,661.7 133.0,670.0C119.7,678.3 117.3,678.5 107.0,689.0C96.7,699.5 97.3,699.2 92.0,712.0C86.7,724.8 90.0,721.7 86.0,740.0C82.0,758.3 81.0,762.5 76.0,785.0C71.0,807.5 70.0,807.5 66.0,830.0C62.0,852.5 62.3,850.0 60.0,875.0C57.7,900.0 -15.5,908.7 57.0,930.0C129.5,951.3 189.2,957.5 350.0,960.0C510.8,962.5 612.5,1005.0 700.0,940.0C787.5,875.0 703.8,761.5 700.0,700.0C696.2,638.5 692.5,698.3 685.0,694.0C677.5,689.7 679.3,690.5 670.0,683.0C660.7,675.5 659.5,672.3 648.0,664.0C636.5,655.7 638.0,659.0 624.0,650.0C610.0,641.0 608.3,637.8 592.0,628.0C575.7,618.2 574.5,617.5 559.0,611.0C543.5,604.5 544.0,605.8 530.0,602.0C516.0,598.2 518.0,589.0 503.0,596.0C488.0,603.0 490.8,615.2 470.0,630.0C449.2,644.8 445.0,647.5 420.0,655.0C395.0,662.5 390.5,661.3 370.0,660.0C349.5,658.7 354.3,658.5 338.0,650.0C321.7,641.5 319.8,639.5 305.0,626.0C290.2,612.5 292.8,598.5 279.0,596.0Z" fill="#dfd1be"/></g><g filter="url(#pb9)"><path d="M112,690 C96,750 76,840 62,921 L150,921 C150,850 146,770 168,690Z" fill="#a9a08f" opacity="0.75"/><path d="M560,780 C570,830 560,880 550,921 L600,921 C600,860 590,800 575,770Z" fill="#a9a08f" opacity="0.5"/><ellipse cx="400" cy="800" rx="160" ry="100" fill="#ebdecc" opacity="0.6"/><ellipse cx="640" cy="800" rx="50" ry="110" fill="#ebdecc" opacity="0.5"/></g><g filter="url(#pb2)" fill="none" stroke="#a9a08f" stroke-linecap="round"><path d="M121,669 C100,700 82,750 67,818 C62,850 60,880 58,915" stroke-width="8" opacity="0.85"/><path d="M107,718 C112,760 122,820 139,897" stroke-width="8" opacity="0.7"/><path d="M199,678 C170,720 140,790 132,836 C132,860 134,876 137,890" stroke-width="9" opacity="0.7"/><path d="M222,758 C196,790 160,840 146,871" stroke-width="7" opacity="0.6"/><path d="M262,670 C240,720 226,790 232,900" stroke-width="12" opacity="0.35"/><path d="M556,700 C580,760 590,830 580,910" stroke-width="10" opacity="0.4"/><path d="M600,690 C640,740 660,800 664,900" stroke-width="9" opacity="0.3"/></g><g filter="url(#pb2)"><path d="M169.0,167.0C172.0,149.7 167.7,147.0 179.0,129.0C190.3,111.0 193.2,106.5 214.0,95.0C234.8,83.5 239.7,84.8 262.0,83.0C284.3,81.2 288.0,84.2 303.0,88.0C318.0,91.8 310.7,96.7 322.0,98.0C333.3,99.3 330.2,92.0 348.0,93.0C365.8,94.0 368.7,94.7 393.0,102.0C417.3,109.3 423.5,109.2 445.0,122.0C466.5,134.8 463.5,134.0 479.0,153.0C494.5,172.0 495.7,175.5 507.0,198.0C518.3,220.5 515.5,219.7 524.0,243.0C532.5,266.3 531.5,267.7 541.0,291.0C550.5,314.3 551.5,313.5 562.0,336.0C572.5,358.5 576.0,359.5 583.0,381.0C590.0,402.5 584.5,397.0 590.0,422.0C595.5,447.0 598.5,456.5 605.0,481.0C611.5,505.5 611.2,502.2 616.0,520.0C620.8,537.8 623.0,537.0 624.0,552.0C625.0,567.0 624.0,568.0 620.0,580.0C616.0,592.0 618.3,591.2 608.0,600.0C597.7,608.8 594.0,613.5 579.0,615.0C564.0,616.5 562.8,611.8 548.0,606.0C533.2,600.2 532.0,599.0 520.0,592.0C508.0,585.0 512.5,589.8 500.0,578.0C487.5,566.2 495.0,549.5 470.0,545.0C445.0,540.5 442.5,556.2 400.0,560.0C357.5,563.8 329.0,556.2 300.0,560.0C271.0,563.8 289.5,566.0 284.0,575.0C278.5,584.0 283.5,584.7 278.0,596.0C272.5,607.3 272.5,610.7 262.0,620.0C251.5,629.3 250.3,630.5 236.0,633.0C221.7,635.5 220.3,634.8 205.0,630.0C189.7,625.2 187.8,624.0 175.0,614.0C162.2,604.0 161.5,603.5 154.0,590.0C146.5,576.5 147.8,574.3 145.0,560.0C142.2,545.7 142.2,548.5 143.0,533.0C143.8,517.5 143.7,512.8 148.0,498.0C152.3,483.2 157.7,487.0 160.0,474.0C162.3,461.0 158.3,461.5 157.0,446.0C155.7,430.5 153.7,429.0 155.0,412.0C156.3,395.0 157.7,395.3 162.0,378.0C166.3,360.7 167.2,361.3 172.0,343.0C176.8,324.7 177.5,324.8 181.0,305.0C184.5,285.2 187.8,283.0 186.0,264.0C184.2,245.0 178.8,245.5 174.0,229.0C169.2,212.5 168.3,213.5 167.0,198.0C165.7,182.5 166.0,184.3 169.0,167.0Z" fill="#242220"/></g><g filter="url(#pb4)" opacity="0.42" fill="none" stroke="#55514b"><path d="M200,200 C210,150 260,112 320,118" stroke-width="14"/><path d="M396,128 C440,150 478,200 500,260" stroke-width="13"/><path d="M524,300 C545,360 565,410 572,460" stroke-width="12"/><path d="M548,500 C584,530 602,560 590,596" stroke-width="12"/><path d="M190,330 C176,380 170,430 178,470" stroke-width="11"/><path d="M166,520 C160,560 180,600 220,618" stroke-width="11"/></g><g filter="url(#pb2)" opacity="0.38" fill="none" stroke="#55514b" stroke-linecap="round"><path d="M388,112 C340,120 270,140 214,196" stroke-width="4"/><path d="M388,132 C330,146 262,172 206,232" stroke-width="4"/><path d="M390,160 C340,170 280,196 232,236" stroke-width="3.5"/><path d="M392,190 C350,196 300,206 262,222" stroke-width="3"/><path d="M402,112 C450,128 486,170 506,226" stroke-width="4"/><path d="M404,140 C444,160 476,200 494,262" stroke-width="4"/><path d="M406,176 C436,196 462,232 480,276" stroke-width="3.5"/><path d="M508,250 C540,290 556,330 560,372" stroke-width="4"/><path d="M530,330 C548,352 574,400 582,440" stroke-width="4"/><path d="M500,440 C530,430 566,440 590,470" stroke-width="5"/><path d="M494,500 C530,486 580,500 612,540" stroke-width="5"/><path d="M520,560 C550,548 590,560 606,590" stroke-width="5"/><path d="M204,250 C196,300 186,340 170,380" stroke-width="4"/><path d="M196,330 C186,380 176,420 166,450" stroke-width="4"/><path d="M160,470 C176,460 200,470 214,500" stroke-width="5"/><path d="M150,520 C176,506 214,520 236,556" stroke-width="5"/><path d="M160,580 C190,566 230,580 254,610" stroke-width="5"/></g><g filter="url(#pb2)"><path d="M283.0,530.0C270.5,532.5 275.7,545.0 280.0,560.0C284.3,575.0 289.5,575.5 300.0,590.0C310.5,604.5 311.2,605.5 322.0,618.0C332.8,630.5 333.0,641.5 343.0,640.0C353.0,638.5 350.2,624.5 362.0,612.0C373.8,599.5 376.5,601.0 390.0,590.0C403.5,579.0 403.5,579.3 416.0,568.0C428.5,556.7 431.0,557.0 440.0,545.0C449.0,533.0 462.0,521.3 452.0,520.0C442.0,518.7 430.5,532.5 400.0,540.0C369.5,547.5 359.3,552.5 330.0,550.0C300.7,547.5 295.5,527.5 283.0,530.0Z" fill="#a89e8f"/></g><g filter="url(#pb4)"><ellipse cx="352" cy="606" rx="26" ry="26" fill="#d8cfbf" opacity="0.55"/></g><g filter="url(#pb1)"><path d="M279.0,556.0C276.2,559.3 277.0,566.0 277.0,575.0C277.0,584.0 273.2,582.7 279.0,592.0C284.8,601.3 289.2,603.0 300.0,612.0C310.8,621.0 311.2,621.0 322.0,628.0C332.8,635.0 339.5,641.5 343.0,640.0C346.5,638.5 342.3,632.0 336.0,622.0C329.7,612.0 327.0,611.0 318.0,600.0C309.0,589.0 307.5,587.5 300.0,578.0C292.5,568.5 293.3,567.5 288.0,562.0C282.7,556.5 281.8,552.7 279.0,556.0Z" fill="#a9a08f"/><path d="M464.0,519.0C472.0,518.7 471.0,531.7 478.0,545.0C485.0,558.3 485.7,559.0 492.0,572.0C498.3,585.0 504.0,585.0 503.0,597.0C502.0,609.0 498.8,608.7 488.0,620.0C477.2,631.3 478.3,632.0 460.0,642.0C441.7,652.0 435.0,657.0 415.0,660.0C395.0,663.0 396.5,659.0 380.0,654.0C363.5,649.0 356.0,648.0 349.0,640.0C342.0,632.0 348.2,630.5 352.0,622.0C355.8,613.5 355.0,614.0 364.0,606.0C373.0,598.0 376.5,597.0 388.0,590.0C399.5,583.0 400.0,584.0 410.0,578.0C420.0,572.0 419.0,574.0 428.0,566.0C437.0,558.0 437.0,557.8 446.0,546.0C455.0,534.2 456.0,519.3 464.0,519.0Z" fill="#e4dac8"/><path d="M464,519 C450,548 420,572 392,588 C370,602 354,620 349,640" stroke="#a9a08f" stroke-width="2.5" fill="none" opacity="0.7"/><path d="M503,597 C488,622 456,645 415,660 C392,662 368,652 349,640" stroke="#a9a08f" stroke-width="2.5" fill="none" opacity="0.6"/><path d="M279,592 C298,612 320,628 343,640" stroke="#ebdecc" stroke-width="3" fill="none" opacity="0.8"/></g><g filter="url(#pb1)"><path d="M338,660 C318,650 296,652 280,660 C279,670 281,682 284,690 C304,686 322,680 338,672Z M344,660 C362,650 388,644 405,643 C406,662 403,684 398,700 C380,692 360,682 344,674Z" fill="#ebdecc" stroke="#a9a08f" stroke-width="2.5"/><ellipse cx="341" cy="665" rx="9" ry="11" fill="#e4dac8" stroke="#a9a08f" stroke-width="2.5"/><path d="M224,734 C228,752 230,770 231,788 M228,732 C238,748 244,760 249,773 M214,700 L226,730 M240,694 L228,730" stroke="#ebdecc" stroke-width="5" fill="none" opacity="0.95"/><path d="M224,734 C228,752 230,770 231,788 M228,732 C238,748 244,760 249,773" stroke="#a9a08f" stroke-width="1.5" fill="none" opacity="0.8" transform="translate(3,1)"/><path d="M344,680 C320,700 280,716 240,728" stroke="#a9a08f" stroke-width="3" fill="none" opacity="0.75"/></g><g filter="url(#pb2)"><path d="M210.0,457.0C208.1,446.7 209.0,427.8 208.6,395.0C208.2,362.2 208.2,357.0 208.6,326.0C209.0,295.0 206.9,291.8 210.0,271.0C213.1,250.2 212.2,254.3 221.0,243.0C229.8,231.7 230.5,232.9 245.0,226.0C259.5,219.1 260.0,219.0 279.0,215.5C298.0,212.0 300.2,212.9 321.0,212.0C341.8,211.1 344.0,210.2 362.0,212.0C380.0,213.8 376.7,213.0 393.0,219.0C409.3,225.0 410.7,223.0 427.0,236.0C443.3,249.0 445.7,253.0 458.0,271.0C470.3,289.0 469.0,294.2 476.0,308.0C483.0,321.8 480.0,324.7 486.0,326.0C492.0,327.3 493.0,316.5 500.0,313.0C507.0,309.5 508.5,307.0 514.0,312.0C519.5,317.0 521.0,316.7 522.0,333.0C523.0,349.3 522.8,357.2 518.0,377.0C513.2,396.8 511.8,401.2 503.0,412.0C494.2,422.8 489.5,413.0 483.0,420.0C476.5,427.0 479.8,429.0 477.0,440.0C474.2,451.0 475.8,449.5 472.0,464.0C468.2,478.5 468.3,483.0 462.0,498.0C455.7,513.0 455.5,513.0 447.0,524.0C438.5,535.0 439.3,534.0 428.0,542.0C416.7,550.0 415.5,550.5 402.0,556.0C388.5,561.5 387.3,561.5 374.0,564.0C360.7,566.5 362.0,566.5 349.0,566.0C336.0,565.5 334.8,565.5 322.0,562.0C309.2,558.5 308.3,557.5 298.0,552.0C287.7,546.5 290.0,547.5 281.0,540.0C272.0,532.5 270.8,532.0 262.0,522.0C253.2,512.0 253.8,512.0 246.0,500.0C238.2,488.0 238.5,490.0 231.0,474.0C223.5,458.0 221.3,440.3 216.0,436.0C210.7,431.7 211.9,467.3 210.0,457.0Z" fill="#d8cfbf"/></g><g filter="url(#pb9)"><path d="M209,300 C206,400 226,490 290,560 C256,510 244,420 244,330Z" fill="#a89e8f" opacity="0.8"/><path d="M486,330 C486,420 466,500 410,556 C440,520 462,470 468,400Z" fill="#a89e8f" opacity="0.45"/><ellipse cx="340" cy="265" rx="100" ry="36" fill="#e9e1d2" opacity="0.9"/><ellipse cx="352" cy="410" rx="46" ry="60" fill="#e9e1d2" opacity="0.75"/><ellipse cx="440" cy="420" rx="30" ry="50" fill="#e9e1d2" opacity="0.45"/><ellipse cx="350" cy="540" rx="34" ry="14" fill="#e9e1d2" opacity="0.6"/></g><g filter="url(#pb4)"><path d="M300,350 C292,390 288,420 292,446" stroke="#a89e8f" stroke-width="16" fill="none" opacity="0.7"/><ellipse cx="262" cy="340" rx="36" ry="14" fill="#a89e8f" opacity="0.45"/><ellipse cx="400" cy="336" rx="40" ry="13" fill="#a89e8f" opacity="0.35"/><ellipse cx="334" cy="524" rx="30" ry="7" fill="#a89e8f" opacity="0.6"/><path d="M494,330 C504,350 504,380 494,404" stroke="#a89e8f" stroke-width="7" fill="none" opacity="0.6"/></g><g filter="url(#pb4)"><path d="M214,330 C210,400 224,470 262,524 C244,470 236,400 240,340Z" fill="#a89e8f" opacity="0.55"/><path d="M236,470 C250,510 276,540 310,560 C290,530 270,500 262,470Z" fill="#a89e8f" opacity="0.45"/><ellipse cx="266" cy="334" rx="34" ry="10" fill="#a89e8f" opacity="0.45"/><ellipse cx="398" cy="330" rx="38" ry="10" fill="#a89e8f" opacity="0.35"/><path d="M333,455 L334,476" stroke="#a89e8f" stroke-width="8" opacity="0.45"/><ellipse cx="326" cy="405" rx="10" ry="34" fill="#e9e1d2" opacity="0.7"/><ellipse cx="416" cy="420" rx="26" ry="30" fill="#e9e1d2" opacity="0.4"/></g><g filter="url(#pb1)"><path d="M221,324 C236,312 256,308 276,311 C286,313 294,317 301,323 C280,318 248,317 221,324Z" fill="#4a4540" stroke="#4a4540" stroke-width="3.5" stroke-linejoin="round" opacity="0.9"/><path d="M361,318 C380,306 400,302 418,304 C432,307 442,312 449,319 C424,311 392,311 361,318Z" fill="#4a4540" stroke="#4a4540" stroke-width="3.5" stroke-linejoin="round" opacity="0.9"/><path d="M242,358 C254,347 280,346 294,360 C280,365 256,365 242,358Z" fill="#a89e8f" opacity="0.9"/><path d="M368,354 C382,343 408,341 424,350 C408,360 384,360 368,354Z" fill="#a89e8f" opacity="0.9"/><ellipse cx="270" cy="355" rx="10.5" ry="8.5" fill="#3a3531"/><ellipse cx="395" cy="350" rx="10.5" ry="8.5" fill="#3a3531"/><path d="M236,358 C252,340 282,340 298,361" stroke="#2a2725" stroke-width="4" fill="none"/><path d="M363,354 C380,336 410,334 430,348" stroke="#2a2725" stroke-width="4" fill="none"/><path d="M244,362 C258,368 280,368 294,362 M370,358 C386,364 408,362 422,354" stroke="#4a4540" stroke-width="1.6" fill="none" opacity="0.7"/><path d="M298,436 C300,448 312,450 322,446 C332,452 346,450 356,438" stroke="#4a4540" stroke-width="3.5" fill="none" opacity="0.75"/><ellipse cx="311" cy="442" rx="7" ry="4" fill="#2a2725" opacity="0.85"/><ellipse cx="344" cy="440" rx="7" ry="4" fill="#2a2725" opacity="0.8"/><path d="M295,489 C310,479 322,474 333,480 C344,474 358,478 376,488 C356,496 316,497 295,489Z" fill="#5a524d"/><path d="M299,491 C316,515 356,515 373,490 C350,497 320,498 299,491Z" fill="#8a7f76"/><path d="M297,489 C320,495 350,495 375,488" stroke="#5a524d" stroke-width="2.5" fill="none"/></g></g><g stroke="#f8f3e8" fill="none" stroke-linecap="round" opacity="0.8"><path d="M8,498 C120,530 220,590 330,640 C450,690 580,760 704,796" stroke-width="5"/><path d="M24,190 C80,130 150,60 210,20" stroke-width="5"/><path d="M486,20 C500,80 540,110 600,140" stroke-width="3"/></g></g></svg><svg class="a" style="left:81px;top:0px;overflow:hidden;" width="80" height="82" viewBox="32 75 654 685" preserveAspectRatio="none"><g clip-path="url(#pclip)"><rect width="705" height="943" fill="#fdfcfa"/><path d="M46,10 H701 V943 H9 L7,70 Q8,24 46,10Z" fill="#e8d8b8" filter="url(#pb1)"/><g clip-path="url(#pinner)"><rect x="20" y="20.5" width="666" height="900.5" fill="#e3d3b3"/><g filter="url(#pb9)"><ellipse cx="400" cy="60" rx="380" ry="70" fill="#d4c29e" opacity="0.7"/><ellipse cx="640" cy="200" rx="60" ry="150" fill="#d4c29e" opacity="0.35"/><ellipse cx="60" cy="560" rx="95" ry="330" fill="#eadcc0" opacity="0.9"/><ellipse cx="40" cy="860" rx="120" ry="120" fill="#eadcc0" opacity="0.55"/><ellipse cx="70" cy="240" rx="60" ry="100" fill="#eadcc0" opacity="0.25"/></g><rect x="20" y="20.5" width="666" height="900.5" fill="url(#vign)"/><g filter="url(#pb2)"><path d="M279.0,596.0C265.2,593.5 266.3,607.0 250.0,616.0C233.7,625.0 227.8,626.5 214.0,632.0C200.2,637.5 208.5,632.0 195.0,638.0C181.5,644.0 175.5,648.0 160.0,656.0C144.5,664.0 146.3,661.7 133.0,670.0C119.7,678.3 117.3,678.5 107.0,689.0C96.7,699.5 97.3,699.2 92.0,712.0C86.7,724.8 90.0,721.7 86.0,740.0C82.0,758.3 81.0,762.5 76.0,785.0C71.0,807.5 70.0,807.5 66.0,830.0C62.0,852.5 62.3,850.0 60.0,875.0C57.7,900.0 -15.5,908.7 57.0,930.0C129.5,951.3 189.2,957.5 350.0,960.0C510.8,962.5 612.5,1005.0 700.0,940.0C787.5,875.0 703.8,761.5 700.0,700.0C696.2,638.5 692.5,698.3 685.0,694.0C677.5,689.7 679.3,690.5 670.0,683.0C660.7,675.5 659.5,672.3 648.0,664.0C636.5,655.7 638.0,659.0 624.0,650.0C610.0,641.0 608.3,637.8 592.0,628.0C575.7,618.2 574.5,617.5 559.0,611.0C543.5,604.5 544.0,605.8 530.0,602.0C516.0,598.2 518.0,589.0 503.0,596.0C488.0,603.0 490.8,615.2 470.0,630.0C449.2,644.8 445.0,647.5 420.0,655.0C395.0,662.5 390.5,661.3 370.0,660.0C349.5,658.7 354.3,658.5 338.0,650.0C321.7,641.5 319.8,639.5 305.0,626.0C290.2,612.5 292.8,598.5 279.0,596.0Z" fill="#eab5b1"/></g><g filter="url(#pb9)"><path d="M112,690 C96,750 76,840 62,921 L150,921 C150,850 146,770 168,690Z" fill="#cf8f8c" opacity="0.75"/><path d="M560,780 C570,830 560,880 550,921 L600,921 C600,860 590,800 575,770Z" fill="#cf8f8c" opacity="0.5"/><ellipse cx="400" cy="800" rx="160" ry="100" fill="#f6cfcb" opacity="0.6"/><ellipse cx="640" cy="800" rx="50" ry="110" fill="#f6cfcb" opacity="0.5"/></g><g filter="url(#pb2)" fill="none" stroke="#cf8f8c" stroke-linecap="round"><path d="M121,669 C100,700 82,750 67,818 C62,850 60,880 58,915" stroke-width="8" opacity="0.85"/><path d="M107,718 C112,760 122,820 139,897" stroke-width="8" opacity="0.7"/><path d="M199,678 C170,720 140,790 132,836 C132,860 134,876 137,890" stroke-width="9" opacity="0.7"/><path d="M222,758 C196,790 160,840 146,871" stroke-width="7" opacity="0.6"/><path d="M262,670 C240,720 226,790 232,900" stroke-width="12" opacity="0.35"/><path d="M556,700 C580,760 590,830 580,910" stroke-width="10" opacity="0.4"/><path d="M600,690 C640,740 660,800 664,900" stroke-width="9" opacity="0.3"/></g><g filter="url(#pb2)"><path d="M169.0,167.0C172.0,149.7 167.7,147.0 179.0,129.0C190.3,111.0 193.2,106.5 214.0,95.0C234.8,83.5 239.7,84.8 262.0,83.0C284.3,81.2 288.0,84.2 303.0,88.0C318.0,91.8 310.7,96.7 322.0,98.0C333.3,99.3 330.2,92.0 348.0,93.0C365.8,94.0 368.7,94.7 393.0,102.0C417.3,109.3 423.5,109.2 445.0,122.0C466.5,134.8 463.5,134.0 479.0,153.0C494.5,172.0 495.7,175.5 507.0,198.0C518.3,220.5 515.5,219.7 524.0,243.0C532.5,266.3 531.5,267.7 541.0,291.0C550.5,314.3 551.5,313.5 562.0,336.0C572.5,358.5 576.0,359.5 583.0,381.0C590.0,402.5 584.5,397.0 590.0,422.0C595.5,447.0 598.5,456.5 605.0,481.0C611.5,505.5 611.2,502.2 616.0,520.0C620.8,537.8 623.0,537.0 624.0,552.0C625.0,567.0 624.0,568.0 620.0,580.0C616.0,592.0 618.3,591.2 608.0,600.0C597.7,608.8 594.0,613.5 579.0,615.0C564.0,616.5 562.8,611.8 548.0,606.0C533.2,600.2 532.0,599.0 520.0,592.0C508.0,585.0 512.5,589.8 500.0,578.0C487.5,566.2 495.0,549.5 470.0,545.0C445.0,540.5 442.5,556.2 400.0,560.0C357.5,563.8 329.0,556.2 300.0,560.0C271.0,563.8 289.5,566.0 284.0,575.0C278.5,584.0 283.5,584.7 278.0,596.0C272.5,607.3 272.5,610.7 262.0,620.0C251.5,629.3 250.3,630.5 236.0,633.0C221.7,635.5 220.3,634.8 205.0,630.0C189.7,625.2 187.8,624.0 175.0,614.0C162.2,604.0 161.5,603.5 154.0,590.0C146.5,576.5 147.8,574.3 145.0,560.0C142.2,545.7 142.2,548.5 143.0,533.0C143.8,517.5 143.7,512.8 148.0,498.0C152.3,483.2 157.7,487.0 160.0,474.0C162.3,461.0 158.3,461.5 157.0,446.0C155.7,430.5 153.7,429.0 155.0,412.0C156.3,395.0 157.7,395.3 162.0,378.0C166.3,360.7 167.2,361.3 172.0,343.0C176.8,324.7 177.5,324.8 181.0,305.0C184.5,285.2 187.8,283.0 186.0,264.0C184.2,245.0 178.8,245.5 174.0,229.0C169.2,212.5 168.3,213.5 167.0,198.0C165.7,182.5 166.0,184.3 169.0,167.0Z" fill="#261a15"/></g><g filter="url(#pb4)" opacity="0.42" fill="none" stroke="#4e382d"><path d="M200,200 C210,150 260,112 320,118" stroke-width="14"/><path d="M396,128 C440,150 478,200 500,260" stroke-width="13"/><path d="M524,300 C545,360 565,410 572,460" stroke-width="12"/><path d="M548,500 C584,530 602,560 590,596" stroke-width="12"/><path d="M190,330 C176,380 170,430 178,470" stroke-width="11"/><path d="M166,520 C160,560 180,600 220,618" stroke-width="11"/></g><g filter="url(#pb2)" opacity="0.38" fill="none" stroke="#4e382d" stroke-linecap="round"><path d="M388,112 C340,120 270,140 214,196" stroke-width="4"/><path d="M388,132 C330,146 262,172 206,232" stroke-width="4"/><path d="M390,160 C340,170 280,196 232,236" stroke-width="3.5"/><path d="M392,190 C350,196 300,206 262,222" stroke-width="3"/><path d="M402,112 C450,128 486,170 506,226" stroke-width="4"/><path d="M404,140 C444,160 476,200 494,262" stroke-width="4"/><path d="M406,176 C436,196 462,232 480,276" stroke-width="3.5"/><path d="M508,250 C540,290 556,330 560,372" stroke-width="4"/><path d="M530,330 C548,352 574,400 582,440" stroke-width="4"/><path d="M500,440 C530,430 566,440 590,470" stroke-width="5"/><path d="M494,500 C530,486 580,500 612,540" stroke-width="5"/><path d="M520,560 C550,548 590,560 606,590" stroke-width="5"/><path d="M204,250 C196,300 186,340 170,380" stroke-width="4"/><path d="M196,330 C186,380 176,420 166,450" stroke-width="4"/><path d="M160,470 C176,460 200,470 214,500" stroke-width="5"/><path d="M150,520 C176,506 214,520 236,556" stroke-width="5"/><path d="M160,580 C190,566 230,580 254,610" stroke-width="5"/></g><g filter="url(#pb2)"><path d="M283.0,530.0C270.5,532.5 275.7,545.0 280.0,560.0C284.3,575.0 289.5,575.5 300.0,590.0C310.5,604.5 311.2,605.5 322.0,618.0C332.8,630.5 333.0,641.5 343.0,640.0C353.0,638.5 350.2,624.5 362.0,612.0C373.8,599.5 376.5,601.0 390.0,590.0C403.5,579.0 403.5,579.3 416.0,568.0C428.5,556.7 431.0,557.0 440.0,545.0C449.0,533.0 462.0,521.3 452.0,520.0C442.0,518.7 430.5,532.5 400.0,540.0C369.5,547.5 359.3,552.5 330.0,550.0C300.7,547.5 295.5,527.5 283.0,530.0Z" fill="#c99678"/></g><g filter="url(#pb4)"><ellipse cx="352" cy="606" rx="26" ry="26" fill="#ebc6aa" opacity="0.55"/></g><g filter="url(#pb1)"><path d="M279.0,556.0C276.2,559.3 277.0,566.0 277.0,575.0C277.0,584.0 273.2,582.7 279.0,592.0C284.8,601.3 289.2,603.0 300.0,612.0C310.8,621.0 311.2,621.0 322.0,628.0C332.8,635.0 339.5,641.5 343.0,640.0C346.5,638.5 342.3,632.0 336.0,622.0C329.7,612.0 327.0,611.0 318.0,600.0C309.0,589.0 307.5,587.5 300.0,578.0C292.5,568.5 293.3,567.5 288.0,562.0C282.7,556.5 281.8,552.7 279.0,556.0Z" fill="#cf8f8c"/><path d="M464.0,519.0C472.0,518.7 471.0,531.7 478.0,545.0C485.0,558.3 485.7,559.0 492.0,572.0C498.3,585.0 504.0,585.0 503.0,597.0C502.0,609.0 498.8,608.7 488.0,620.0C477.2,631.3 478.3,632.0 460.0,642.0C441.7,652.0 435.0,657.0 415.0,660.0C395.0,663.0 396.5,659.0 380.0,654.0C363.5,649.0 356.0,648.0 349.0,640.0C342.0,632.0 348.2,630.5 352.0,622.0C355.8,613.5 355.0,614.0 364.0,606.0C373.0,598.0 376.5,597.0 388.0,590.0C399.5,583.0 400.0,584.0 410.0,578.0C420.0,572.0 419.0,574.0 428.0,566.0C437.0,558.0 437.0,557.8 446.0,546.0C455.0,534.2 456.0,519.3 464.0,519.0Z" fill="#f0c2bd"/><path d="M464,519 C450,548 420,572 392,588 C370,602 354,620 349,640" stroke="#cf8f8c" stroke-width="2.5" fill="none" opacity="0.7"/><path d="M503,597 C488,622 456,645 415,660 C392,662 368,652 349,640" stroke="#cf8f8c" stroke-width="2.5" fill="none" opacity="0.6"/><path d="M279,592 C298,612 320,628 343,640" stroke="#f6cfcb" stroke-width="3" fill="none" opacity="0.8"/></g><g filter="url(#pb1)"><path d="M338,660 C318,650 296,652 280,660 C279,670 281,682 284,690 C304,686 322,680 338,672Z M344,660 C362,650 388,644 405,643 C406,662 403,684 398,700 C380,692 360,682 344,674Z" fill="#f6cfcb" stroke="#cf8f8c" stroke-width="2.5"/><ellipse cx="341" cy="665" rx="9" ry="11" fill="#f0c2bd" stroke="#cf8f8c" stroke-width="2.5"/><path d="M224,734 C228,752 230,770 231,788 M228,732 C238,748 244,760 249,773 M214,700 L226,730 M240,694 L228,730" stroke="#f6cfcb" stroke-width="5" fill="none" opacity="0.95"/><path d="M224,734 C228,752 230,770 231,788 M228,732 C238,748 244,760 249,773" stroke="#cf8f8c" stroke-width="1.5" fill="none" opacity="0.8" transform="translate(3,1)"/><path d="M344,680 C320,700 280,716 240,728" stroke="#cf8f8c" stroke-width="3" fill="none" opacity="0.75"/></g><g filter="url(#pb2)"><path d="M210.0,457.0C208.1,446.7 209.0,427.8 208.6,395.0C208.2,362.2 208.2,357.0 208.6,326.0C209.0,295.0 206.9,291.8 210.0,271.0C213.1,250.2 212.2,254.3 221.0,243.0C229.8,231.7 230.5,232.9 245.0,226.0C259.5,219.1 260.0,219.0 279.0,215.5C298.0,212.0 300.2,212.9 321.0,212.0C341.8,211.1 344.0,210.2 362.0,212.0C380.0,213.8 376.7,213.0 393.0,219.0C409.3,225.0 410.7,223.0 427.0,236.0C443.3,249.0 445.7,253.0 458.0,271.0C470.3,289.0 469.0,294.2 476.0,308.0C483.0,321.8 480.0,324.7 486.0,326.0C492.0,327.3 493.0,316.5 500.0,313.0C507.0,309.5 508.5,307.0 514.0,312.0C519.5,317.0 521.0,316.7 522.0,333.0C523.0,349.3 522.8,357.2 518.0,377.0C513.2,396.8 511.8,401.2 503.0,412.0C494.2,422.8 489.5,413.0 483.0,420.0C476.5,427.0 479.8,429.0 477.0,440.0C474.2,451.0 475.8,449.5 472.0,464.0C468.2,478.5 468.3,483.0 462.0,498.0C455.7,513.0 455.5,513.0 447.0,524.0C438.5,535.0 439.3,534.0 428.0,542.0C416.7,550.0 415.5,550.5 402.0,556.0C388.5,561.5 387.3,561.5 374.0,564.0C360.7,566.5 362.0,566.5 349.0,566.0C336.0,565.5 334.8,565.5 322.0,562.0C309.2,558.5 308.3,557.5 298.0,552.0C287.7,546.5 290.0,547.5 281.0,540.0C272.0,532.5 270.8,532.0 262.0,522.0C253.2,512.0 253.8,512.0 246.0,500.0C238.2,488.0 238.5,490.0 231.0,474.0C223.5,458.0 221.3,440.3 216.0,436.0C210.7,431.7 211.9,467.3 210.0,457.0Z" fill="#ebc6aa"/></g><g filter="url(#pb9)"><path d="M209,300 C206,400 226,490 290,560 C256,510 244,420 244,330Z" fill="#c99678" opacity="0.8"/><path d="M486,330 C486,420 466,500 410,556 C440,520 462,470 468,400Z" fill="#c99678" opacity="0.45"/><ellipse cx="340" cy="265" rx="100" ry="36" fill="#f6dcc6" opacity="0.9"/><ellipse cx="352" cy="410" rx="46" ry="60" fill="#f6dcc6" opacity="0.75"/><ellipse cx="440" cy="420" rx="30" ry="50" fill="#f6dcc6" opacity="0.45"/><ellipse cx="350" cy="540" rx="34" ry="14" fill="#f6dcc6" opacity="0.6"/></g><g filter="url(#pb4)"><path d="M300,350 C292,390 288,420 292,446" stroke="#c99678" stroke-width="16" fill="none" opacity="0.7"/><ellipse cx="262" cy="340" rx="36" ry="14" fill="#c99678" opacity="0.45"/><ellipse cx="400" cy="336" rx="40" ry="13" fill="#c99678" opacity="0.35"/><ellipse cx="334" cy="524" rx="30" ry="7" fill="#c99678" opacity="0.6"/><path d="M494,330 C504,350 504,380 494,404" stroke="#c99678" stroke-width="7" fill="none" opacity="0.6"/></g><g filter="url(#pb4)"><path d="M214,330 C210,400 224,470 262,524 C244,470 236,400 240,340Z" fill="#c99678" opacity="0.55"/><path d="M236,470 C250,510 276,540 310,560 C290,530 270,500 262,470Z" fill="#c99678" opacity="0.45"/><ellipse cx="266" cy="334" rx="34" ry="10" fill="#c99678" opacity="0.45"/><ellipse cx="398" cy="330" rx="38" ry="10" fill="#c99678" opacity="0.35"/><path d="M333,455 L334,476" stroke="#c99678" stroke-width="8" opacity="0.45"/><ellipse cx="326" cy="405" rx="10" ry="34" fill="#f6dcc6" opacity="0.7"/><ellipse cx="416" cy="420" rx="26" ry="30" fill="#f6dcc6" opacity="0.4"/></g><g filter="url(#pb1)"><path d="M221,324 C236,312 256,308 276,311 C286,313 294,317 301,323 C280,318 248,317 221,324Z" fill="#4a3329" stroke="#4a3329" stroke-width="3.5" stroke-linejoin="round" opacity="0.9"/><path d="M361,318 C380,306 400,302 418,304 C432,307 442,312 449,319 C424,311 392,311 361,318Z" fill="#4a3329" stroke="#4a3329" stroke-width="3.5" stroke-linejoin="round" opacity="0.9"/><path d="M242,358 C254,347 280,346 294,360 C280,365 256,365 242,358Z" fill="#c99678" opacity="0.9"/><path d="M368,354 C382,343 408,341 424,350 C408,360 384,360 368,354Z" fill="#c99678" opacity="0.9"/><ellipse cx="270" cy="355" rx="10.5" ry="8.5" fill="#3a251d"/><ellipse cx="395" cy="350" rx="10.5" ry="8.5" fill="#3a251d"/><path d="M236,358 C252,340 282,340 298,361" stroke="#2a1c17" stroke-width="4" fill="none"/><path d="M363,354 C380,336 410,334 430,348" stroke="#2a1c17" stroke-width="4" fill="none"/><path d="M244,362 C258,368 280,368 294,362 M370,358 C386,364 408,362 422,354" stroke="#4a3329" stroke-width="1.6" fill="none" opacity="0.7"/><path d="M298,436 C300,448 312,450 322,446 C332,452 346,450 356,438" stroke="#4a3329" stroke-width="3.5" fill="none" opacity="0.75"/><ellipse cx="311" cy="442" rx="7" ry="4" fill="#2a1c17" opacity="0.85"/><ellipse cx="344" cy="440" rx="7" ry="4" fill="#2a1c17" opacity="0.8"/><path d="M295,489 C310,479 322,474 333,480 C344,474 358,478 376,488 C356,496 316,497 295,489Z" fill="#b4463d"/><path d="M299,491 C316,515 356,515 373,490 C350,497 320,498 299,491Z" fill="#c9655c"/><path d="M297,489 C320,495 350,495 375,488" stroke="#b4463d" stroke-width="2.5" fill="none"/></g></g></g></svg><div class="a" style="left:79.3px;top:0;width:2.2px;height:82px;background:#f6f6f6"></div></div>
<div class="a t" style="left:223px;top:297.0px;height:30px;line-height:30px;font-size:19.5px;color:#c6c7cb;font-weight:400;">AI 老照片修复</div>
<div class="a" style="left:404px;top:258px;width:30px;height:20px;border-radius:3.5px 3.5px 0 3.5px;background:linear-gradient(100deg,#ff5548 0%,#ffa23a 13%,#fff0ae 32%,#f0fbf6 47%,#82c6f2 66%,#97a9f8 84%,#b793fc 100%);"></div>
<div class="a t" style="left:404px;top:258px;width:30px;height:20px;line-height:20.5px;text-align:center;font-size:15px;font-weight:700;color:#000;letter-spacing:-0.2px;">AI</div>
<svg class="a" style="left:430px;top:278px" width="4" height="6" viewBox="0 0 4 6"><path d="M0,0 H4 L0,5.6Z" fill="#43366e"/></svg>
<div class="a" style="left:26px;top:375px;width:404px;height:101px;background:#2b2c33;border-radius:4px;"></div>
<div class="a" style="left:36px;top:385px;width:161px;height:82px;border-radius:3px;overflow:hidden;background:#888;"><svg class="a" style="left:0;top:0" width="161" height="82" viewBox="0 0 161 82"><defs><clipPath id="c4a"><rect width="79.5" height="82"/></clipPath></defs><g clip-path="url(#c4a)"><g transform="translate(0,0)"><rect width="80" height="82" fill="#aeb9b8"/><g filter="url(#tb2)"><ellipse cx="44" cy="8" rx="14" ry="12" fill="#5d7c84"/><ellipse cx="14" cy="8" rx="18" ry="8" fill="#c9ccd0"/><ellipse cx="66" cy="22" rx="18" ry="24" fill="#d9d3cc"/><path d="M0,16 C10,18 20,26 26,36 C20,44 10,48 0,50Z" fill="#77705c"/><path d="M0,18 C8,18 16,24 22,30" stroke="#b8c46a" stroke-width="3" fill="none"/><path d="M60,40 C68,42 76,46 80,50 V60 H60Z" fill="#a69c7e"/><path d="M0,68 C6,72 14,78 22,82 H0Z" fill="#6e7448"/></g><g filter="url(#tb1)"><path d="M0,48 C10,46 20,40 28,30 C32,24 38,22 44,24 C52,26 58,34 60,44 C64,52 72,52 80,50 V82 H20 C12,78 4,72 0,66Z" fill="#e5e6f3"/>
<path d="M28,30 C34,26 42,24 46,26 L50,50 C44,58 34,60 26,56 C24,46 26,36 28,30Z" fill="#e9e4ee"/>
<path d="M56,46 C58,38 60,32 62,28 L64,30 C62,38 62,46 62,52Z" fill="#e6cfc4"/>
<path d="M20,52 C30,60 44,64 56,62 L66,76 C60,80 50,82 40,82 C30,78 24,66 20,52Z" fill="#dcdcec" opacity="0.8"/>
<ellipse cx="52" cy="60" rx="6" ry="7" fill="#d9c197"/><ellipse cx="53" cy="57" rx="5" ry="4" fill="#f2efe9"/>
<path d="M44,24 C46,30 48,38 49,46 L46,46 C46,38 45,30 44,24Z" fill="#141518"/>
<ellipse cx="41" cy="11" rx="6.6" ry="7" fill="#15161a"/><path d="M42,12 C46,12 48,16 47,20 C45,22 42,21 41,18Z" fill="#ecd6cc"/><circle cx="46" cy="5" r="2" fill="#e8e2dc"/></g></g></g><g transform="translate(81,0)"><rect width="80" height="82" fill="#dfe5ee"/><g filter="url(#tb2)"><path d="M0,18 C10,16 22,24 28,34 C20,40 8,42 0,40Z" fill="#8e9096"/><ellipse cx="60" cy="20" rx="24" ry="22" fill="#eef1f6"/><ellipse cx="20" cy="8" rx="24" ry="8" fill="#eef2f7"/><path d="M0,40 H80 V82 H0Z" fill="#e6eaf3"/></g><g filter="url(#tb1)"><path d="M0,48 C10,46 20,40 28,30 C32,24 38,22 44,24 C52,26 58,34 60,44 C64,52 72,52 80,50 V82 H20 C12,78 4,72 0,66Z" fill="#e5e6f3"/>
<path d="M28,30 C34,26 42,24 46,26 L50,50 C44,58 34,60 26,56 C24,46 26,36 28,30Z" fill="#e9e4ee"/>
<path d="M56,46 C58,38 60,32 62,28 L64,30 C62,38 62,46 62,52Z" fill="#e6cfc4"/>
<path d="M20,52 C30,60 44,64 56,62 L66,76 C60,80 50,82 40,82 C30,78 24,66 20,52Z" fill="#dcdcec" opacity="0.8"/>
<ellipse cx="52" cy="60" rx="6" ry="7" fill="#d9c197"/><ellipse cx="53" cy="57" rx="5" ry="4" fill="#f2efe9"/>
<path d="M44,24 C46,30 48,38 49,46 L46,46 C46,38 45,30 44,24Z" fill="#141518"/>
<ellipse cx="41" cy="11" rx="6.6" ry="7" fill="#15161a"/><path d="M42,12 C46,12 48,16 47,20 C45,22 42,21 41,18Z" fill="#ecd6cc"/><circle cx="46" cy="5" r="2" fill="#e8e2dc"/></g><rect width="80" height="82" filter="url(#tnoise)" opacity="0.55"/></g><rect x="79.3" width="2.2" height="82" fill="#f6f6f6"/></svg></div>
<div class="a t" style="left:223px;top:412.0px;height:30px;line-height:30px;font-size:19.5px;color:#c6c7cb;font-weight:400;">AI 换天气</div>
<div class="a" style="left:404px;top:373px;width:30px;height:20px;border-radius:3.5px 3.5px 0 3.5px;background:linear-gradient(100deg,#ff5548 0%,#ffa23a 13%,#fff0ae 32%,#f0fbf6 47%,#82c6f2 66%,#97a9f8 84%,#b793fc 100%);"></div>
<div class="a t" style="left:404px;top:373px;width:30px;height:20px;line-height:20.5px;text-align:center;font-size:15px;font-weight:700;color:#000;letter-spacing:-0.2px;">AI</div>
<svg class="a" style="left:430px;top:393px" width="4" height="6" viewBox="0 0 4 6"><path d="M0,0 H4 L0,5.6Z" fill="#43366e"/></svg>
<div class="a" style="left:26px;top:490px;width:404px;height:101px;background:#2b2c33;border-radius:4px;"></div>
<div class="a" style="left:36px;top:500px;width:161px;height:82px;border-radius:3px;overflow:hidden;background:#888;"><svg class="a" style="left:0;top:0" width="161" height="82" viewBox="0 0 161 82"><defs><clipPath id="c4a"><rect width="79.5" height="82"/></clipPath></defs><g clip-path="url(#c4a)"><g transform="translate(0,0)"><rect width="80" height="82" fill="#d5d3db"/><g filter="url(#tb1)"><path d="M11,25 C6,26 6,40 10,47 C12,51 16,51 18,47 V28Z" fill="#e0b9a7"/><path d="M66,31 C73,30 74,43 70,50 C68,54 64,52 64,47Z" fill="#e3bfae"/><path d="M26,60 L24,82 H64 L58,66Z" fill="#e2bba9"/><path d="M18,22 C20,8 34,4 46,5 C60,6 68,18 68,36 C68,52 60,68 50,76 C46,80 38,80 34,76 C24,68 18,52 17,38Z" fill="url(#skin5)"/><path d="M14,0 H66 C71,8 73,20 70,33 C68,24 64,15 56,9 C46,4 34,6 26,14 C20,22 18,32 19,42 C12,34 7,14 14,0Z" fill="#1b191a"/><path d="M28,27 C32,24 38,24 43,27 M51,28 C55,25 61,25 65,28" stroke="#4a3a34" stroke-width="1.2" fill="none"/><ellipse cx="36" cy="33.5" rx="4.8" ry="1.9" fill="#4a2e2a"/><ellipse cx="58" cy="34.5" rx="4.6" ry="1.9" fill="#4a2e2a"/><ellipse cx="34" cy="37" rx="9" ry="5" fill="#e0a59c" opacity="0.5"/><ellipse cx="59" cy="38" rx="8" ry="5" fill="#e0a59c" opacity="0.45"/><path d="M42,48 C44,52 51,52 54,48" stroke="#c99a88" stroke-width="1.6" fill="none"/><path d="M36,56 C42,58 50,58 56,56 C52,64 42,64 36,56Z" fill="#d96f74"/><ellipse cx="47" cy="22" rx="10" ry="8" fill="#fbeee6" opacity="0.7"/><ellipse cx="30" cy="44" rx="5" ry="4" fill="#fbeee6" opacity="0.6"/></g></g></g><g transform="translate(81,0)"><rect width="80" height="82" fill="#d5d3db"/><g filter="url(#tb1)"><path d="M11,25 C6,26 6,40 10,47 C12,51 16,51 18,47 V28Z" fill="#e0b9a7"/><path d="M66,31 C73,30 74,43 70,50 C68,54 64,52 64,47Z" fill="#e3bfae"/><path d="M26,60 L24,82 H64 L58,66Z" fill="#e2bba9"/><path d="M18,22 C20,8 34,4 46,5 C60,6 68,18 68,36 C68,52 60,68 50,76 C46,80 38,80 34,76 C24,68 18,52 17,38Z" fill="url(#skin5)"/><path d="M14,0 H66 C71,8 73,20 70,33 C68,24 64,15 56,9 C46,4 34,6 26,14 C20,22 18,32 19,42 C12,34 7,14 14,0Z" fill="#1b191a"/><path d="M28,27 C32,24 38,24 43,27 M51,28 C55,25 61,25 65,28" stroke="#4a3a34" stroke-width="1.2" fill="none"/><ellipse cx="36" cy="33.5" rx="4.8" ry="1.9" fill="#4a2e2a"/><ellipse cx="58" cy="34.5" rx="4.6" ry="1.9" fill="#4a2e2a"/><path d="M42,48 C44,52 51,52 54,48" stroke="#c99a88" stroke-width="1.6" fill="none"/><path d="M36,56 C42,58 50,58 56,56 C52,64 42,64 36,56Z" fill="#d96f74"/><ellipse cx="47" cy="22" rx="10" ry="8" fill="#fbeee6" opacity="0.7"/><ellipse cx="30" cy="44" rx="5" ry="4" fill="#fbeee6" opacity="0.6"/></g></g><rect x="79.3" width="2.2" height="82" fill="#f6f6f6"/></svg></div>
<div class="a t" style="left:223px;top:527.0px;height:30px;line-height:30px;font-size:19.5px;color:#c6c7cb;font-weight:400;">AI 面部重绘</div>
<div class="a" style="left:404px;top:488px;width:30px;height:20px;border-radius:3.5px 3.5px 0 3.5px;background:linear-gradient(100deg,#ff5548 0%,#ffa23a 13%,#fff0ae 32%,#f0fbf6 47%,#82c6f2 66%,#97a9f8 84%,#b793fc 100%);"></div>
<div class="a t" style="left:404px;top:488px;width:30px;height:20px;line-height:20.5px;text-align:center;font-size:15px;font-weight:700;color:#000;letter-spacing:-0.2px;">AI</div>
<svg class="a" style="left:430px;top:508px" width="4" height="6" viewBox="0 0 4 6"><path d="M0,0 H4 L0,5.6Z" fill="#43366e"/></svg></div>
<div class="a" style="left:1962px;top:779px;width:460px;height:2px;background:#000;"></div>
<div class="a t" style="left:1989px;top:807.0px;height:30px;line-height:30px;font-size:21px;color:#fff;font-weight:700;">图层</div>
<div class="a" style="left:2349.5px;top:798px;width:46.5px;height:46.5px;background:#464852;border-radius:4px;"></div>
<svg class="a" style="left:2358.0px;top:809.5px;" width="30" height="24" viewBox="-15.0 -12.0 30 24" fill="none"><path d="M-12.6,-6.4 H-4.4 M-1.4,-6.4 H12.6 M-4.6,-9.4 V-3.4 M-12.6,6.4 H4.4 M7.4,6.4 H12.6 M4.6,3.4 V9.4" stroke="#e6e6e8" stroke-width="1.7" fill="none" /></svg>
<div class="a" style="left:1962px;top:858px;width:460px;height:2px;background:#000;"></div>
<div class="a" style="left:1983px;top:879px;width:197.5px;height:45.5px;background:#32333a;border:1.5px solid #484950;border-radius:4px;"></div>
<div class="a t" style="left:2000px;top:887.0px;height:30px;line-height:30px;font-size:19.5px;color:#c6c7cb;font-weight:400;">正常</div>
<svg class="a" style="left:2142.5px;top:895.0px;" width="22" height="14" viewBox="-11.0 -7.0 22 14" fill="none"><path d="M-8.5,-4.4 L0,4.4 L8.5,-4.4" stroke="#d0d1d4" stroke-width="1.9" fill="none" /></svg>
<div class="a t" style="left:2209px;top:887.0px;height:30px;line-height:30px;font-size:19.5px;color:#e4e4e6;font-weight:400;">不透明度</div>
<div class="a" style="left:2300px;top:879px;width:99px;height:45.5px;background:#32333a;border:1.5px solid #484950;border-radius:4px;"></div>
<div class="a t" style="left:2314px;top:887.0px;height:30px;line-height:30px;font-size:20.5px;color:#c6c7cb;font-weight:400;">100</div>
<div class="a t" style="left:2366px;top:886.5px;height:30px;line-height:30px;font-size:17px;color:#7f8188;font-weight:400;">%</div>
<div class="a" style="left:1975px;top:951px;width:434px;height:66px;background:#464852;border-radius:4px;"></div>
<div class="a" style="left:1987.4px;top:957px;width:54px;height:54px;border-radius:5.5px;background:#0b0b0c;border:2px solid #f3d34a;overflow:hidden;"><div class="a" style="left:1.6px;top:1.6px;width:46.8px;height:46.8px;border-radius:2.5px;background:#50525b;overflow:hidden;"><svg class="a" style="left:3.7px;top:-0.8px;overflow:hidden;" width="38.3" height="48" viewBox="0 0 705 943" preserveAspectRatio="none"><g clip-path="url(#pclip)"><rect width="705" height="943" fill="#fdfcfa"/><path d="M46,10 H701 V943 H9 L7,70 Q8,24 46,10Z" fill="#e8dfc9" filter="url(#pb1)"/><g clip-path="url(#pinner)"><rect x="20" y="20.5" width="666" height="900.5" fill="#aca394"/><g filter="url(#pb9)"><ellipse cx="400" cy="60" rx="380" ry="70" fill="#978e80" opacity="0.7"/><ellipse cx="640" cy="200" rx="60" ry="150" fill="#978e80" opacity="0.35"/><ellipse cx="60" cy="560" rx="95" ry="330" fill="#d3c7af" opacity="0.9"/><ellipse cx="40" cy="860" rx="120" ry="120" fill="#d3c7af" opacity="0.55"/><ellipse cx="70" cy="240" rx="60" ry="100" fill="#d3c7af" opacity="0.25"/></g><rect x="20" y="20.5" width="666" height="900.5" fill="url(#vign)"/><g filter="url(#pb2)"><path d="M279.0,596.0C265.2,593.5 266.3,607.0 250.0,616.0C233.7,625.0 227.8,626.5 214.0,632.0C200.2,637.5 208.5,632.0 195.0,638.0C181.5,644.0 175.5,648.0 160.0,656.0C144.5,664.0 146.3,661.7 133.0,670.0C119.7,678.3 117.3,678.5 107.0,689.0C96.7,699.5 97.3,699.2 92.0,712.0C86.7,724.8 90.0,721.7 86.0,740.0C82.0,758.3 81.0,762.5 76.0,785.0C71.0,807.5 70.0,807.5 66.0,830.0C62.0,852.5 62.3,850.0 60.0,875.0C57.7,900.0 -15.5,908.7 57.0,930.0C129.5,951.3 189.2,957.5 350.0,960.0C510.8,962.5 612.5,1005.0 700.0,940.0C787.5,875.0 703.8,761.5 700.0,700.0C696.2,638.5 692.5,698.3 685.0,694.0C677.5,689.7 679.3,690.5 670.0,683.0C660.7,675.5 659.5,672.3 648.0,664.0C636.5,655.7 638.0,659.0 624.0,650.0C610.0,641.0 608.3,637.8 592.0,628.0C575.7,618.2 574.5,617.5 559.0,611.0C543.5,604.5 544.0,605.8 530.0,602.0C516.0,598.2 518.0,589.0 503.0,596.0C488.0,603.0 490.8,615.2 470.0,630.0C449.2,644.8 445.0,647.5 420.0,655.0C395.0,662.5 390.5,661.3 370.0,660.0C349.5,658.7 354.3,658.5 338.0,650.0C321.7,641.5 319.8,639.5 305.0,626.0C290.2,612.5 292.8,598.5 279.0,596.0Z" fill="#dfd1be"/></g><g filter="url(#pb9)"><path d="M112,690 C96,750 76,840 62,921 L150,921 C150,850 146,770 168,690Z" fill="#a9a08f" opacity="0.75"/><path d="M560,780 C570,830 560,880 550,921 L600,921 C600,860 590,800 575,770Z" fill="#a9a08f" opacity="0.5"/><ellipse cx="400" cy="800" rx="160" ry="100" fill="#ebdecc" opacity="0.6"/><ellipse cx="640" cy="800" rx="50" ry="110" fill="#ebdecc" opacity="0.5"/></g><g filter="url(#pb2)" fill="none" stroke="#a9a08f" stroke-linecap="round"><path d="M121,669 C100,700 82,750 67,818 C62,850 60,880 58,915" stroke-width="8" opacity="0.85"/><path d="M107,718 C112,760 122,820 139,897" stroke-width="8" opacity="0.7"/><path d="M199,678 C170,720 140,790 132,836 C132,860 134,876 137,890" stroke-width="9" opacity="0.7"/><path d="M222,758 C196,790 160,840 146,871" stroke-width="7" opacity="0.6"/><path d="M262,670 C240,720 226,790 232,900" stroke-width="12" opacity="0.35"/><path d="M556,700 C580,760 590,830 580,910" stroke-width="10" opacity="0.4"/><path d="M600,690 C640,740 660,800 664,900" stroke-width="9" opacity="0.3"/></g><g filter="url(#pb2)"><path d="M169.0,167.0C172.0,149.7 167.7,147.0 179.0,129.0C190.3,111.0 193.2,106.5 214.0,95.0C234.8,83.5 239.7,84.8 262.0,83.0C284.3,81.2 288.0,84.2 303.0,88.0C318.0,91.8 310.7,96.7 322.0,98.0C333.3,99.3 330.2,92.0 348.0,93.0C365.8,94.0 368.7,94.7 393.0,102.0C417.3,109.3 423.5,109.2 445.0,122.0C466.5,134.8 463.5,134.0 479.0,153.0C494.5,172.0 495.7,175.5 507.0,198.0C518.3,220.5 515.5,219.7 524.0,243.0C532.5,266.3 531.5,267.7 541.0,291.0C550.5,314.3 551.5,313.5 562.0,336.0C572.5,358.5 576.0,359.5 583.0,381.0C590.0,402.5 584.5,397.0 590.0,422.0C595.5,447.0 598.5,456.5 605.0,481.0C611.5,505.5 611.2,502.2 616.0,520.0C620.8,537.8 623.0,537.0 624.0,552.0C625.0,567.0 624.0,568.0 620.0,580.0C616.0,592.0 618.3,591.2 608.0,600.0C597.7,608.8 594.0,613.5 579.0,615.0C564.0,616.5 562.8,611.8 548.0,606.0C533.2,600.2 532.0,599.0 520.0,592.0C508.0,585.0 512.5,589.8 500.0,578.0C487.5,566.2 495.0,549.5 470.0,545.0C445.0,540.5 442.5,556.2 400.0,560.0C357.5,563.8 329.0,556.2 300.0,560.0C271.0,563.8 289.5,566.0 284.0,575.0C278.5,584.0 283.5,584.7 278.0,596.0C272.5,607.3 272.5,610.7 262.0,620.0C251.5,629.3 250.3,630.5 236.0,633.0C221.7,635.5 220.3,634.8 205.0,630.0C189.7,625.2 187.8,624.0 175.0,614.0C162.2,604.0 161.5,603.5 154.0,590.0C146.5,576.5 147.8,574.3 145.0,560.0C142.2,545.7 142.2,548.5 143.0,533.0C143.8,517.5 143.7,512.8 148.0,498.0C152.3,483.2 157.7,487.0 160.0,474.0C162.3,461.0 158.3,461.5 157.0,446.0C155.7,430.5 153.7,429.0 155.0,412.0C156.3,395.0 157.7,395.3 162.0,378.0C166.3,360.7 167.2,361.3 172.0,343.0C176.8,324.7 177.5,324.8 181.0,305.0C184.5,285.2 187.8,283.0 186.0,264.0C184.2,245.0 178.8,245.5 174.0,229.0C169.2,212.5 168.3,213.5 167.0,198.0C165.7,182.5 166.0,184.3 169.0,167.0Z" fill="#242220"/></g><g filter="url(#pb4)" opacity="0.42" fill="none" stroke="#55514b"><path d="M200,200 C210,150 260,112 320,118" stroke-width="14"/><path d="M396,128 C440,150 478,200 500,260" stroke-width="13"/><path d="M524,300 C545,360 565,410 572,460" stroke-width="12"/><path d="M548,500 C584,530 602,560 590,596" stroke-width="12"/><path d="M190,330 C176,380 170,430 178,470" stroke-width="11"/><path d="M166,520 C160,560 180,600 220,618" stroke-width="11"/></g><g filter="url(#pb2)" opacity="0.38" fill="none" stroke="#55514b" stroke-linecap="round"><path d="M388,112 C340,120 270,140 214,196" stroke-width="4"/><path d="M388,132 C330,146 262,172 206,232" stroke-width="4"/><path d="M390,160 C340,170 280,196 232,236" stroke-width="3.5"/><path d="M392,190 C350,196 300,206 262,222" stroke-width="3"/><path d="M402,112 C450,128 486,170 506,226" stroke-width="4"/><path d="M404,140 C444,160 476,200 494,262" stroke-width="4"/><path d="M406,176 C436,196 462,232 480,276" stroke-width="3.5"/><path d="M508,250 C540,290 556,330 560,372" stroke-width="4"/><path d="M530,330 C548,352 574,400 582,440" stroke-width="4"/><path d="M500,440 C530,430 566,440 590,470" stroke-width="5"/><path d="M494,500 C530,486 580,500 612,540" stroke-width="5"/><path d="M520,560 C550,548 590,560 606,590" stroke-width="5"/><path d="M204,250 C196,300 186,340 170,380" stroke-width="4"/><path d="M196,330 C186,380 176,420 166,450" stroke-width="4"/><path d="M160,470 C176,460 200,470 214,500" stroke-width="5"/><path d="M150,520 C176,506 214,520 236,556" stroke-width="5"/><path d="M160,580 C190,566 230,580 254,610" stroke-width="5"/></g><g filter="url(#pb2)"><path d="M283.0,530.0C270.5,532.5 275.7,545.0 280.0,560.0C284.3,575.0 289.5,575.5 300.0,590.0C310.5,604.5 311.2,605.5 322.0,618.0C332.8,630.5 333.0,641.5 343.0,640.0C353.0,638.5 350.2,624.5 362.0,612.0C373.8,599.5 376.5,601.0 390.0,590.0C403.5,579.0 403.5,579.3 416.0,568.0C428.5,556.7 431.0,557.0 440.0,545.0C449.0,533.0 462.0,521.3 452.0,520.0C442.0,518.7 430.5,532.5 400.0,540.0C369.5,547.5 359.3,552.5 330.0,550.0C300.7,547.5 295.5,527.5 283.0,530.0Z" fill="#a89e8f"/></g><g filter="url(#pb4)"><ellipse cx="352" cy="606" rx="26" ry="26" fill="#d8cfbf" opacity="0.55"/></g><g filter="url(#pb1)"><path d="M279.0,556.0C276.2,559.3 277.0,566.0 277.0,575.0C277.0,584.0 273.2,582.7 279.0,592.0C284.8,601.3 289.2,603.0 300.0,612.0C310.8,621.0 311.2,621.0 322.0,628.0C332.8,635.0 339.5,641.5 343.0,640.0C346.5,638.5 342.3,632.0 336.0,622.0C329.7,612.0 327.0,611.0 318.0,600.0C309.0,589.0 307.5,587.5 300.0,578.0C292.5,568.5 293.3,567.5 288.0,562.0C282.7,556.5 281.8,552.7 279.0,556.0Z" fill="#a9a08f"/><path d="M464.0,519.0C472.0,518.7 471.0,531.7 478.0,545.0C485.0,558.3 485.7,559.0 492.0,572.0C498.3,585.0 504.0,585.0 503.0,597.0C502.0,609.0 498.8,608.7 488.0,620.0C477.2,631.3 478.3,632.0 460.0,642.0C441.7,652.0 435.0,657.0 415.0,660.0C395.0,663.0 396.5,659.0 380.0,654.0C363.5,649.0 356.0,648.0 349.0,640.0C342.0,632.0 348.2,630.5 352.0,622.0C355.8,613.5 355.0,614.0 364.0,606.0C373.0,598.0 376.5,597.0 388.0,590.0C399.5,583.0 400.0,584.0 410.0,578.0C420.0,572.0 419.0,574.0 428.0,566.0C437.0,558.0 437.0,557.8 446.0,546.0C455.0,534.2 456.0,519.3 464.0,519.0Z" fill="#e4dac8"/><path d="M464,519 C450,548 420,572 392,588 C370,602 354,620 349,640" stroke="#a9a08f" stroke-width="2.5" fill="none" opacity="0.7"/><path d="M503,597 C488,622 456,645 415,660 C392,662 368,652 349,640" stroke="#a9a08f" stroke-width="2.5" fill="none" opacity="0.6"/><path d="M279,592 C298,612 320,628 343,640" stroke="#ebdecc" stroke-width="3" fill="none" opacity="0.8"/></g><g filter="url(#pb1)"><path d="M338,660 C318,650 296,652 280,660 C279,670 281,682 284,690 C304,686 322,680 338,672Z M344,660 C362,650 388,644 405,643 C406,662 403,684 398,700 C380,692 360,682 344,674Z" fill="#ebdecc" stroke="#a9a08f" stroke-width="2.5"/><ellipse cx="341" cy="665" rx="9" ry="11" fill="#e4dac8" stroke="#a9a08f" stroke-width="2.5"/><path d="M224,734 C228,752 230,770 231,788 M228,732 C238,748 244,760 249,773 M214,700 L226,730 M240,694 L228,730" stroke="#ebdecc" stroke-width="5" fill="none" opacity="0.95"/><path d="M224,734 C228,752 230,770 231,788 M228,732 C238,748 244,760 249,773" stroke="#a9a08f" stroke-width="1.5" fill="none" opacity="0.8" transform="translate(3,1)"/><path d="M344,680 C320,700 280,716 240,728" stroke="#a9a08f" stroke-width="3" fill="none" opacity="0.75"/></g><g filter="url(#pb2)"><path d="M210.0,457.0C208.1,446.7 209.0,427.8 208.6,395.0C208.2,362.2 208.2,357.0 208.6,326.0C209.0,295.0 206.9,291.8 210.0,271.0C213.1,250.2 212.2,254.3 221.0,243.0C229.8,231.7 230.5,232.9 245.0,226.0C259.5,219.1 260.0,219.0 279.0,215.5C298.0,212.0 300.2,212.9 321.0,212.0C341.8,211.1 344.0,210.2 362.0,212.0C380.0,213.8 376.7,213.0 393.0,219.0C409.3,225.0 410.7,223.0 427.0,236.0C443.3,249.0 445.7,253.0 458.0,271.0C470.3,289.0 469.0,294.2 476.0,308.0C483.0,321.8 480.0,324.7 486.0,326.0C492.0,327.3 493.0,316.5 500.0,313.0C507.0,309.5 508.5,307.0 514.0,312.0C519.5,317.0 521.0,316.7 522.0,333.0C523.0,349.3 522.8,357.2 518.0,377.0C513.2,396.8 511.8,401.2 503.0,412.0C494.2,422.8 489.5,413.0 483.0,420.0C476.5,427.0 479.8,429.0 477.0,440.0C474.2,451.0 475.8,449.5 472.0,464.0C468.2,478.5 468.3,483.0 462.0,498.0C455.7,513.0 455.5,513.0 447.0,524.0C438.5,535.0 439.3,534.0 428.0,542.0C416.7,550.0 415.5,550.5 402.0,556.0C388.5,561.5 387.3,561.5 374.0,564.0C360.7,566.5 362.0,566.5 349.0,566.0C336.0,565.5 334.8,565.5 322.0,562.0C309.2,558.5 308.3,557.5 298.0,552.0C287.7,546.5 290.0,547.5 281.0,540.0C272.0,532.5 270.8,532.0 262.0,522.0C253.2,512.0 253.8,512.0 246.0,500.0C238.2,488.0 238.5,490.0 231.0,474.0C223.5,458.0 221.3,440.3 216.0,436.0C210.7,431.7 211.9,467.3 210.0,457.0Z" fill="#d8cfbf"/></g><g filter="url(#pb9)"><path d="M209,300 C206,400 226,490 290,560 C256,510 244,420 244,330Z" fill="#a89e8f" opacity="0.8"/><path d="M486,330 C486,420 466,500 410,556 C440,520 462,470 468,400Z" fill="#a89e8f" opacity="0.45"/><ellipse cx="340" cy="265" rx="100" ry="36" fill="#e9e1d2" opacity="0.9"/><ellipse cx="352" cy="410" rx="46" ry="60" fill="#e9e1d2" opacity="0.75"/><ellipse cx="440" cy="420" rx="30" ry="50" fill="#e9e1d2" opacity="0.45"/><ellipse cx="350" cy="540" rx="34" ry="14" fill="#e9e1d2" opacity="0.6"/></g><g filter="url(#pb4)"><path d="M300,350 C292,390 288,420 292,446" stroke="#a89e8f" stroke-width="16" fill="none" opacity="0.7"/><ellipse cx="262" cy="340" rx="36" ry="14" fill="#a89e8f" opacity="0.45"/><ellipse cx="400" cy="336" rx="40" ry="13" fill="#a89e8f" opacity="0.35"/><ellipse cx="334" cy="524" rx="30" ry="7" fill="#a89e8f" opacity="0.6"/><path d="M494,330 C504,350 504,380 494,404" stroke="#a89e8f" stroke-width="7" fill="none" opacity="0.6"/></g><g filter="url(#pb4)"><path d="M214,330 C210,400 224,470 262,524 C244,470 236,400 240,340Z" fill="#a89e8f" opacity="0.55"/><path d="M236,470 C250,510 276,540 310,560 C290,530 270,500 262,470Z" fill="#a89e8f" opacity="0.45"/><ellipse cx="266" cy="334" rx="34" ry="10" fill="#a89e8f" opacity="0.45"/><ellipse cx="398" cy="330" rx="38" ry="10" fill="#a89e8f" opacity="0.35"/><path d="M333,455 L334,476" stroke="#a89e8f" stroke-width="8" opacity="0.45"/><ellipse cx="326" cy="405" rx="10" ry="34" fill="#e9e1d2" opacity="0.7"/><ellipse cx="416" cy="420" rx="26" ry="30" fill="#e9e1d2" opacity="0.4"/></g><g filter="url(#pb1)"><path d="M221,324 C236,312 256,308 276,311 C286,313 294,317 301,323 C280,318 248,317 221,324Z" fill="#4a4540" stroke="#4a4540" stroke-width="3.5" stroke-linejoin="round" opacity="0.9"/><path d="M361,318 C380,306 400,302 418,304 C432,307 442,312 449,319 C424,311 392,311 361,318Z" fill="#4a4540" stroke="#4a4540" stroke-width="3.5" stroke-linejoin="round" opacity="0.9"/><path d="M242,358 C254,347 280,346 294,360 C280,365 256,365 242,358Z" fill="#a89e8f" opacity="0.9"/><path d="M368,354 C382,343 408,341 424,350 C408,360 384,360 368,354Z" fill="#a89e8f" opacity="0.9"/><ellipse cx="270" cy="355" rx="10.5" ry="8.5" fill="#3a3531"/><ellipse cx="395" cy="350" rx="10.5" ry="8.5" fill="#3a3531"/><path d="M236,358 C252,340 282,340 298,361" stroke="#2a2725" stroke-width="4" fill="none"/><path d="M363,354 C380,336 410,334 430,348" stroke="#2a2725" stroke-width="4" fill="none"/><path d="M244,362 C258,368 280,368 294,362 M370,358 C386,364 408,362 422,354" stroke="#4a4540" stroke-width="1.6" fill="none" opacity="0.7"/><path d="M298,436 C300,448 312,450 322,446 C332,452 346,450 356,438" stroke="#4a4540" stroke-width="3.5" fill="none" opacity="0.75"/><ellipse cx="311" cy="442" rx="7" ry="4" fill="#2a2725" opacity="0.85"/><ellipse cx="344" cy="440" rx="7" ry="4" fill="#2a2725" opacity="0.8"/><path d="M295,489 C310,479 322,474 333,480 C344,474 358,478 376,488 C356,496 316,497 295,489Z" fill="#5a524d"/><path d="M299,491 C316,515 356,515 373,490 C350,497 320,498 299,491Z" fill="#8a7f76"/><path d="M297,489 C320,495 350,495 375,488" stroke="#5a524d" stroke-width="2.5" fill="none"/></g></g><g stroke="#f8f3e8" fill="none" stroke-linecap="round" opacity="0.8"><path d="M8,498 C120,530 220,590 330,640 C450,690 580,760 704,796" stroke-width="5"/><path d="M24,190 C80,130 150,60 210,20" stroke-width="5"/><path d="M486,20 C500,80 540,110 600,140" stroke-width="3"/></g></g></svg><div class="a" style="left:-2px;top:23.7px;width:25px;height:24px;background:rgba(24,24,26,.8);"></div><svg class="a" style="left:0;top:24px" width="26" height="24" viewBox="0 0 26 24"><path d="M14,2 C15,8.4 16.4,9.8 23,10.8 C16.4,11.8 15,13.2 14,19.6 C13,13.2 11.6,11.8 5,10.8 C11.6,9.8 13,8.4 14,2Z" fill="#f4f4f4" transform="rotate(12 14 10.8)"/><path d="M3.6,15.6 C4,18.4 4.8,19.2 7.6,19.6 C4.8,20 4,20.8 3.6,23.6 C3.2,20.8 2.4,20 -0.4,19.6 C2.4,19.2 3.2,18.4 3.6,15.6Z" fill="#ececec"/></svg></div></div>
<div class="a t" style="left:2047px;top:968.5px;height:30px;line-height:30px;font-size:19.5px;color:#ececee;font-weight:400;">AI 老照片修复 01</div>
<div class="a" style="left:1988.3px;top:1036.8px;width:52.5px;height:52px;border-radius:4.5px;background:#3e3f46;overflow:hidden;"><svg class="a" style="left:6.4px;top:1.4px;overflow:hidden;" width="38.3" height="49.2" viewBox="0 0 705 943" preserveAspectRatio="none"><g clip-path="url(#pclip)"><rect width="705" height="943" fill="#fdfcfa"/><path d="M46,10 H701 V943 H9 L7,70 Q8,24 46,10Z" fill="#e8dfc9" filter="url(#pb1)"/><g clip-path="url(#pinner)"><rect x="20" y="20.5" width="666" height="900.5" fill="#aca394"/><g filter="url(#pb9)"><ellipse cx="400" cy="60" rx="380" ry="70" fill="#978e80" opacity="0.7"/><ellipse cx="640" cy="200" rx="60" ry="150" fill="#978e80" opacity="0.35"/><ellipse cx="60" cy="560" rx="95" ry="330" fill="#d3c7af" opacity="0.9"/><ellipse cx="40" cy="860" rx="120" ry="120" fill="#d3c7af" opacity="0.55"/><ellipse cx="70" cy="240" rx="60" ry="100" fill="#d3c7af" opacity="0.25"/></g><rect x="20" y="20.5" width="666" height="900.5" fill="url(#vign)"/><g filter="url(#pb2)"><path d="M279.0,596.0C265.2,593.5 266.3,607.0 250.0,616.0C233.7,625.0 227.8,626.5 214.0,632.0C200.2,637.5 208.5,632.0 195.0,638.0C181.5,644.0 175.5,648.0 160.0,656.0C144.5,664.0 146.3,661.7 133.0,670.0C119.7,678.3 117.3,678.5 107.0,689.0C96.7,699.5 97.3,699.2 92.0,712.0C86.7,724.8 90.0,721.7 86.0,740.0C82.0,758.3 81.0,762.5 76.0,785.0C71.0,807.5 70.0,807.5 66.0,830.0C62.0,852.5 62.3,850.0 60.0,875.0C57.7,900.0 -15.5,908.7 57.0,930.0C129.5,951.3 189.2,957.5 350.0,960.0C510.8,962.5 612.5,1005.0 700.0,940.0C787.5,875.0 703.8,761.5 700.0,700.0C696.2,638.5 692.5,698.3 685.0,694.0C677.5,689.7 679.3,690.5 670.0,683.0C660.7,675.5 659.5,672.3 648.0,664.0C636.5,655.7 638.0,659.0 624.0,650.0C610.0,641.0 608.3,637.8 592.0,628.0C575.7,618.2 574.5,617.5 559.0,611.0C543.5,604.5 544.0,605.8 530.0,602.0C516.0,598.2 518.0,589.0 503.0,596.0C488.0,603.0 490.8,615.2 470.0,630.0C449.2,644.8 445.0,647.5 420.0,655.0C395.0,662.5 390.5,661.3 370.0,660.0C349.5,658.7 354.3,658.5 338.0,650.0C321.7,641.5 319.8,639.5 305.0,626.0C290.2,612.5 292.8,598.5 279.0,596.0Z" fill="#dfd1be"/></g><g filter="url(#pb9)"><path d="M112,690 C96,750 76,840 62,921 L150,921 C150,850 146,770 168,690Z" fill="#a9a08f" opacity="0.75"/><path d="M560,780 C570,830 560,880 550,921 L600,921 C600,860 590,800 575,770Z" fill="#a9a08f" opacity="0.5"/><ellipse cx="400" cy="800" rx="160" ry="100" fill="#ebdecc" opacity="0.6"/><ellipse cx="640" cy="800" rx="50" ry="110" fill="#ebdecc" opacity="0.5"/></g><g filter="url(#pb2)" fill="none" stroke="#a9a08f" stroke-linecap="round"><path d="M121,669 C100,700 82,750 67,818 C62,850 60,880 58,915" stroke-width="8" opacity="0.85"/><path d="M107,718 C112,760 122,820 139,897" stroke-width="8" opacity="0.7"/><path d="M199,678 C170,720 140,790 132,836 C132,860 134,876 137,890" stroke-width="9" opacity="0.7"/><path d="M222,758 C196,790 160,840 146,871" stroke-width="7" opacity="0.6"/><path d="M262,670 C240,720 226,790 232,900" stroke-width="12" opacity="0.35"/><path d="M556,700 C580,760 590,830 580,910" stroke-width="10" opacity="0.4"/><path d="M600,690 C640,740 660,800 664,900" stroke-width="9" opacity="0.3"/></g><g filter="url(#pb2)"><path d="M169.0,167.0C172.0,149.7 167.7,147.0 179.0,129.0C190.3,111.0 193.2,106.5 214.0,95.0C234.8,83.5 239.7,84.8 262.0,83.0C284.3,81.2 288.0,84.2 303.0,88.0C318.0,91.8 310.7,96.7 322.0,98.0C333.3,99.3 330.2,92.0 348.0,93.0C365.8,94.0 368.7,94.7 393.0,102.0C417.3,109.3 423.5,109.2 445.0,122.0C466.5,134.8 463.5,134.0 479.0,153.0C494.5,172.0 495.7,175.5 507.0,198.0C518.3,220.5 515.5,219.7 524.0,243.0C532.5,266.3 531.5,267.7 541.0,291.0C550.5,314.3 551.5,313.5 562.0,336.0C572.5,358.5 576.0,359.5 583.0,381.0C590.0,402.5 584.5,397.0 590.0,422.0C595.5,447.0 598.5,456.5 605.0,481.0C611.5,505.5 611.2,502.2 616.0,520.0C620.8,537.8 623.0,537.0 624.0,552.0C625.0,567.0 624.0,568.0 620.0,580.0C616.0,592.0 618.3,591.2 608.0,600.0C597.7,608.8 594.0,613.5 579.0,615.0C564.0,616.5 562.8,611.8 548.0,606.0C533.2,600.2 532.0,599.0 520.0,592.0C508.0,585.0 512.5,589.8 500.0,578.0C487.5,566.2 495.0,549.5 470.0,545.0C445.0,540.5 442.5,556.2 400.0,560.0C357.5,563.8 329.0,556.2 300.0,560.0C271.0,563.8 289.5,566.0 284.0,575.0C278.5,584.0 283.5,584.7 278.0,596.0C272.5,607.3 272.5,610.7 262.0,620.0C251.5,629.3 250.3,630.5 236.0,633.0C221.7,635.5 220.3,634.8 205.0,630.0C189.7,625.2 187.8,624.0 175.0,614.0C162.2,604.0 161.5,603.5 154.0,590.0C146.5,576.5 147.8,574.3 145.0,560.0C142.2,545.7 142.2,548.5 143.0,533.0C143.8,517.5 143.7,512.8 148.0,498.0C152.3,483.2 157.7,487.0 160.0,474.0C162.3,461.0 158.3,461.5 157.0,446.0C155.7,430.5 153.7,429.0 155.0,412.0C156.3,395.0 157.7,395.3 162.0,378.0C166.3,360.7 167.2,361.3 172.0,343.0C176.8,324.7 177.5,324.8 181.0,305.0C184.5,285.2 187.8,283.0 186.0,264.0C184.2,245.0 178.8,245.5 174.0,229.0C169.2,212.5 168.3,213.5 167.0,198.0C165.7,182.5 166.0,184.3 169.0,167.0Z" fill="#242220"/></g><g filter="url(#pb4)" opacity="0.42" fill="none" stroke="#55514b"><path d="M200,200 C210,150 260,112 320,118" stroke-width="14"/><path d="M396,128 C440,150 478,200 500,260" stroke-width="13"/><path d="M524,300 C545,360 565,410 572,460" stroke-width="12"/><path d="M548,500 C584,530 602,560 590,596" stroke-width="12"/><path d="M190,330 C176,380 170,430 178,470" stroke-width="11"/><path d="M166,520 C160,560 180,600 220,618" stroke-width="11"/></g><g filter="url(#pb2)" opacity="0.38" fill="none" stroke="#55514b" stroke-linecap="round"><path d="M388,112 C340,120 270,140 214,196" stroke-width="4"/><path d="M388,132 C330,146 262,172 206,232" stroke-width="4"/><path d="M390,160 C340,170 280,196 232,236" stroke-width="3.5"/><path d="M392,190 C350,196 300,206 262,222" stroke-width="3"/><path d="M402,112 C450,128 486,170 506,226" stroke-width="4"/><path d="M404,140 C444,160 476,200 494,262" stroke-width="4"/><path d="M406,176 C436,196 462,232 480,276" stroke-width="3.5"/><path d="M508,250 C540,290 556,330 560,372" stroke-width="4"/><path d="M530,330 C548,352 574,400 582,440" stroke-width="4"/><path d="M500,440 C530,430 566,440 590,470" stroke-width="5"/><path d="M494,500 C530,486 580,500 612,540" stroke-width="5"/><path d="M520,560 C550,548 590,560 606,590" stroke-width="5"/><path d="M204,250 C196,300 186,340 170,380" stroke-width="4"/><path d="M196,330 C186,380 176,420 166,450" stroke-width="4"/><path d="M160,470 C176,460 200,470 214,500" stroke-width="5"/><path d="M150,520 C176,506 214,520 236,556" stroke-width="5"/><path d="M160,580 C190,566 230,580 254,610" stroke-width="5"/></g><g filter="url(#pb2)"><path d="M283.0,530.0C270.5,532.5 275.7,545.0 280.0,560.0C284.3,575.0 289.5,575.5 300.0,590.0C310.5,604.5 311.2,605.5 322.0,618.0C332.8,630.5 333.0,641.5 343.0,640.0C353.0,638.5 350.2,624.5 362.0,612.0C373.8,599.5 376.5,601.0 390.0,590.0C403.5,579.0 403.5,579.3 416.0,568.0C428.5,556.7 431.0,557.0 440.0,545.0C449.0,533.0 462.0,521.3 452.0,520.0C442.0,518.7 430.5,532.5 400.0,540.0C369.5,547.5 359.3,552.5 330.0,550.0C300.7,547.5 295.5,527.5 283.0,530.0Z" fill="#a89e8f"/></g><g filter="url(#pb4)"><ellipse cx="352" cy="606" rx="26" ry="26" fill="#d8cfbf" opacity="0.55"/></g><g filter="url(#pb1)"><path d="M279.0,556.0C276.2,559.3 277.0,566.0 277.0,575.0C277.0,584.0 273.2,582.7 279.0,592.0C284.8,601.3 289.2,603.0 300.0,612.0C310.8,621.0 311.2,621.0 322.0,628.0C332.8,635.0 339.5,641.5 343.0,640.0C346.5,638.5 342.3,632.0 336.0,622.0C329.7,612.0 327.0,611.0 318.0,600.0C309.0,589.0 307.5,587.5 300.0,578.0C292.5,568.5 293.3,567.5 288.0,562.0C282.7,556.5 281.8,552.7 279.0,556.0Z" fill="#a9a08f"/><path d="M464.0,519.0C472.0,518.7 471.0,531.7 478.0,545.0C485.0,558.3 485.7,559.0 492.0,572.0C498.3,585.0 504.0,585.0 503.0,597.0C502.0,609.0 498.8,608.7 488.0,620.0C477.2,631.3 478.3,632.0 460.0,642.0C441.7,652.0 435.0,657.0 415.0,660.0C395.0,663.0 396.5,659.0 380.0,654.0C363.5,649.0 356.0,648.0 349.0,640.0C342.0,632.0 348.2,630.5 352.0,622.0C355.8,613.5 355.0,614.0 364.0,606.0C373.0,598.0 376.5,597.0 388.0,590.0C399.5,583.0 400.0,584.0 410.0,578.0C420.0,572.0 419.0,574.0 428.0,566.0C437.0,558.0 437.0,557.8 446.0,546.0C455.0,534.2 456.0,519.3 464.0,519.0Z" fill="#e4dac8"/><path d="M464,519 C450,548 420,572 392,588 C370,602 354,620 349,640" stroke="#a9a08f" stroke-width="2.5" fill="none" opacity="0.7"/><path d="M503,597 C488,622 456,645 415,660 C392,662 368,652 349,640" stroke="#a9a08f" stroke-width="2.5" fill="none" opacity="0.6"/><path d="M279,592 C298,612 320,628 343,640" stroke="#ebdecc" stroke-width="3" fill="none" opacity="0.8"/></g><g filter="url(#pb1)"><path d="M338,660 C318,650 296,652 280,660 C279,670 281,682 284,690 C304,686 322,680 338,672Z M344,660 C362,650 388,644 405,643 C406,662 403,684 398,700 C380,692 360,682 344,674Z" fill="#ebdecc" stroke="#a9a08f" stroke-width="2.5"/><ellipse cx="341" cy="665" rx="9" ry="11" fill="#e4dac8" stroke="#a9a08f" stroke-width="2.5"/><path d="M224,734 C228,752 230,770 231,788 M228,732 C238,748 244,760 249,773 M214,700 L226,730 M240,694 L228,730" stroke="#ebdecc" stroke-width="5" fill="none" opacity="0.95"/><path d="M224,734 C228,752 230,770 231,788 M228,732 C238,748 244,760 249,773" stroke="#a9a08f" stroke-width="1.5" fill="none" opacity="0.8" transform="translate(3,1)"/><path d="M344,680 C320,700 280,716 240,728" stroke="#a9a08f" stroke-width="3" fill="none" opacity="0.75"/></g><g filter="url(#pb2)"><path d="M210.0,457.0C208.1,446.7 209.0,427.8 208.6,395.0C208.2,362.2 208.2,357.0 208.6,326.0C209.0,295.0 206.9,291.8 210.0,271.0C213.1,250.2 212.2,254.3 221.0,243.0C229.8,231.7 230.5,232.9 245.0,226.0C259.5,219.1 260.0,219.0 279.0,215.5C298.0,212.0 300.2,212.9 321.0,212.0C341.8,211.1 344.0,210.2 362.0,212.0C380.0,213.8 376.7,213.0 393.0,219.0C409.3,225.0 410.7,223.0 427.0,236.0C443.3,249.0 445.7,253.0 458.0,271.0C470.3,289.0 469.0,294.2 476.0,308.0C483.0,321.8 480.0,324.7 486.0,326.0C492.0,327.3 493.0,316.5 500.0,313.0C507.0,309.5 508.5,307.0 514.0,312.0C519.5,317.0 521.0,316.7 522.0,333.0C523.0,349.3 522.8,357.2 518.0,377.0C513.2,396.8 511.8,401.2 503.0,412.0C494.2,422.8 489.5,413.0 483.0,420.0C476.5,427.0 479.8,429.0 477.0,440.0C474.2,451.0 475.8,449.5 472.0,464.0C468.2,478.5 468.3,483.0 462.0,498.0C455.7,513.0 455.5,513.0 447.0,524.0C438.5,535.0 439.3,534.0 428.0,542.0C416.7,550.0 415.5,550.5 402.0,556.0C388.5,561.5 387.3,561.5 374.0,564.0C360.7,566.5 362.0,566.5 349.0,566.0C336.0,565.5 334.8,565.5 322.0,562.0C309.2,558.5 308.3,557.5 298.0,552.0C287.7,546.5 290.0,547.5 281.0,540.0C272.0,532.5 270.8,532.0 262.0,522.0C253.2,512.0 253.8,512.0 246.0,500.0C238.2,488.0 238.5,490.0 231.0,474.0C223.5,458.0 221.3,440.3 216.0,436.0C210.7,431.7 211.9,467.3 210.0,457.0Z" fill="#d8cfbf"/></g><g filter="url(#pb9)"><path d="M209,300 C206,400 226,490 290,560 C256,510 244,420 244,330Z" fill="#a89e8f" opacity="0.8"/><path d="M486,330 C486,420 466,500 410,556 C440,520 462,470 468,400Z" fill="#a89e8f" opacity="0.45"/><ellipse cx="340" cy="265" rx="100" ry="36" fill="#e9e1d2" opacity="0.9"/><ellipse cx="352" cy="410" rx="46" ry="60" fill="#e9e1d2" opacity="0.75"/><ellipse cx="440" cy="420" rx="30" ry="50" fill="#e9e1d2" opacity="0.45"/><ellipse cx="350" cy="540" rx="34" ry="14" fill="#e9e1d2" opacity="0.6"/></g><g filter="url(#pb4)"><path d="M300,350 C292,390 288,420 292,446" stroke="#a89e8f" stroke-width="16" fill="none" opacity="0.7"/><ellipse cx="262" cy="340" rx="36" ry="14" fill="#a89e8f" opacity="0.45"/><ellipse cx="400" cy="336" rx="40" ry="13" fill="#a89e8f" opacity="0.35"/><ellipse cx="334" cy="524" rx="30" ry="7" fill="#a89e8f" opacity="0.6"/><path d="M494,330 C504,350 504,380 494,404" stroke="#a89e8f" stroke-width="7" fill="none" opacity="0.6"/></g><g filter="url(#pb4)"><path d="M214,330 C210,400 224,470 262,524 C244,470 236,400 240,340Z" fill="#a89e8f" opacity="0.55"/><path d="M236,470 C250,510 276,540 310,560 C290,530 270,500 262,470Z" fill="#a89e8f" opacity="0.45"/><ellipse cx="266" cy="334" rx="34" ry="10" fill="#a89e8f" opacity="0.45"/><ellipse cx="398" cy="330" rx="38" ry="10" fill="#a89e8f" opacity="0.35"/><path d="M333,455 L334,476" stroke="#a89e8f" stroke-width="8" opacity="0.45"/><ellipse cx="326" cy="405" rx="10" ry="34" fill="#e9e1d2" opacity="0.7"/><ellipse cx="416" cy="420" rx="26" ry="30" fill="#e9e1d2" opacity="0.4"/></g><g filter="url(#pb1)"><path d="M221,324 C236,312 256,308 276,311 C286,313 294,317 301,323 C280,318 248,317 221,324Z" fill="#4a4540" stroke="#4a4540" stroke-width="3.5" stroke-linejoin="round" opacity="0.9"/><path d="M361,318 C380,306 400,302 418,304 C432,307 442,312 449,319 C424,311 392,311 361,318Z" fill="#4a4540" stroke="#4a4540" stroke-width="3.5" stroke-linejoin="round" opacity="0.9"/><path d="M242,358 C254,347 280,346 294,360 C280,365 256,365 242,358Z" fill="#a89e8f" opacity="0.9"/><path d="M368,354 C382,343 408,341 424,350 C408,360 384,360 368,354Z" fill="#a89e8f" opacity="0.9"/><ellipse cx="270" cy="355" rx="10.5" ry="8.5" fill="#3a3531"/><ellipse cx="395" cy="350" rx="10.5" ry="8.5" fill="#3a3531"/><path d="M236,358 C252,340 282,340 298,361" stroke="#2a2725" stroke-width="4" fill="none"/><path d="M363,354 C380,336 410,334 430,348" stroke="#2a2725" stroke-width="4" fill="none"/><path d="M244,362 C258,368 280,368 294,362 M370,358 C386,364 408,362 422,354" stroke="#4a4540" stroke-width="1.6" fill="none" opacity="0.7"/><path d="M298,436 C300,448 312,450 322,446 C332,452 346,450 356,438" stroke="#4a4540" stroke-width="3.5" fill="none" opacity="0.75"/><ellipse cx="311" cy="442" rx="7" ry="4" fill="#2a2725" opacity="0.85"/><ellipse cx="344" cy="440" rx="7" ry="4" fill="#2a2725" opacity="0.8"/><path d="M295,489 C310,479 322,474 333,480 C344,474 358,478 376,488 C356,496 316,497 295,489Z" fill="#5a524d"/><path d="M299,491 C316,515 356,515 373,490 C350,497 320,498 299,491Z" fill="#8a7f76"/><path d="M297,489 C320,495 350,495 375,488" stroke="#5a524d" stroke-width="2.5" fill="none"/></g></g><g stroke="#f8f3e8" fill="none" stroke-linecap="round" opacity="0.8"><path d="M8,498 C120,530 220,590 330,640 C450,690 580,760 704,796" stroke-width="5"/><path d="M24,190 C80,130 150,60 210,20" stroke-width="5"/><path d="M486,20 C500,80 540,110 600,140" stroke-width="3"/></g></g></svg></div>
<div class="a t" style="left:2047px;top:1048.0px;height:30px;line-height:30px;font-size:19.5px;color:#ececee;font-weight:400;">背景</div>
<div class="a" style="left:1962px;top:1402px;width:460px;height:2px;background:#000;"></div>
<div class="a" style="left:1962px;top:1455.5px;width:560px;height:2.5px;background:#000;border-radius:0 0 6px 0;"></div>
<svg class="a" style="left:2211px;top:1415px;" width="28" height="25" viewBox="2211 1415 28 25" fill="none"><rect x="2214.2" y="1418.8" width="21" height="17.2" stroke="#c3c4c8" stroke-width="1.8" fill="none" /><circle cx="2224.7" cy="1427.4" r="3.4" stroke="#c3c4c8" stroke-width="1.8" fill="none" /></svg>
<svg class="a" style="left:2264px;top:1415px;" width="27" height="25" viewBox="2264 1415 27 25" fill="none"><path d="M2267.9,1436 V1418.8 H2275.3 L2277,1421.9 H2286.9 V1436Z" stroke="#c3c4c8" stroke-width="1.8" fill="none" /></svg>
<svg class="a" style="left:2317px;top:1413px;" width="26" height="27" viewBox="2317 1413 26 27" fill="none"><rect x="2321.2" y="1423.7" width="17.7" height="12.3" stroke="#c3c4c8" stroke-width="1.8" fill="none" /><path d="M2324.7,1423.7 V1422.4 A5.3,5.3 0 0 1 2335.3,1422.4 V1423.7" stroke="#c3c4c8" stroke-width="1.8" fill="none" /><path d="M2330,1427.6 V1432.2" stroke="#c3c4c8" stroke-width="1.8" fill="none" /></svg>
<svg class="a" style="left:2368px;top:1413px;" width="29" height="27" viewBox="2368 1413 29 27" fill="none"><path d="M2371,1421.7 H2394 M2379.2,1416.7 H2386 M2375.4,1421.7 L2375.8,1436 H2389.8 L2390.2,1421.7" stroke="#c3c4c8" stroke-width="1.8" fill="none" /></svg>
<div class="a" style="left:2422px;top:100px;width:2px;height:1358px;background:#000;"></div>
<div class="a" style="left:2432px;top:110px;width:79px;height:79px;background:#383a42;border-radius:5px;"></div>
<svg class="a" style="left:2454px;top:112px;" width="38" height="40" viewBox="2454 112 38 40" fill="none"><path d="M2472.5,122.5 H2461.5 Q2458.8,122.5 2458.8,125.2 V144.1 Q2458.8,146.8 2461.5,146.8 H2484.2" stroke="#fff" stroke-width="2" fill="none" />
<path d="M2483.4,116.2 C2483.9,120.3 2485.3,121.7 2489.4,122.2 C2485.3,122.7 2483.9,124.1 2483.4,128.2 C2482.9,124.1 2481.5,122.7 2477.4,122.2 C2481.5,121.7 2482.9,120.3 2483.4,116.2Z" fill="#fff"/>
<text x="2475.6" y="141.4" text-anchor="middle" font-family="Liberation Sans, sans-serif" font-size="19" font-weight="700" font-style="italic" fill="#fff">Ai</text></svg>
<div class="a t" style="left:2171.5px;width:600px;text-align:center;top:155.0px;height:30px;line-height:30px;font-size:19.5px;color:#fff;font-weight:400;">工具</div>
<svg class="a" style="left:2454.0px;top:206.7px;" width="34" height="34" viewBox="-17.0 -17.0 34 34" fill="none"><circle r="13.4" stroke="#c3c4c8" stroke-width="1.9" fill="none" /><path d="M0,-7.4 V0 H7.4" stroke="#c3c4c8" stroke-width="1.8" fill="none" /></svg>
<div class="a t" style="left:2171.5px;width:600px;text-align:center;top:244.5px;height:30px;line-height:30px;font-size:19.5px;color:#c6c7cb;font-weight:400;">历史</div>
<svg class="a" style="left:2454px;top:293px;" width="36" height="39" viewBox="2454 293 36 39" fill="none"><path d="M2471.9,295 C2472.5,300.1 2474,301.6 2479.1,302.2 C2474,302.8 2472.5,304.3 2471.9,309.4 C2471.3,304.3 2469.8,302.8 2464.7,302.2 C2469.8,301.6 2471.3,300.1 2471.9,295Z" fill="#c3c4c8"/>
<path d="M2464.6,308.6 L2458.4,312.6 L2471.9,321.2 L2485.4,312.6 L2479.2,308.6" stroke="#c3c4c8" stroke-width="2" fill="none" />
<path d="M2458.4,319.2 L2471.9,327.8 L2485.4,319.2" stroke="#c3c4c8" stroke-width="2" fill="none" /></svg>
<div class="a t" style="left:2171.5px;width:600px;text-align:center;top:332.5px;height:30px;line-height:30px;font-size:19.5px;color:#c6c7cb;font-weight:500;">批量</div>
<div class="a" style="left:2481px;top:284.5px;width:33px;height:19.5px;background:#19191c;border-radius:4px;"></div>
<div class="a t" style="left:2197.5px;width:600px;text-align:center;top:279.5px;height:30px;line-height:30px;font-size:12.5px;color:#ffdc4a;font-weight:700;">New</div>
<svg class="a" style="left:2459px;top:1043px;" width="31" height="29" viewBox="2459 1043 31 29" fill="none"><path d="M2482.4,1051.6 V1049.6 Q2482.4,1046.9 2479.7,1046.9 H2465.9 Q2463.2,1046.9 2463.2,1049.6 V1064.8 Q2463.2,1067.5 2465.9,1067.5 H2475.2" stroke="#c3c4c8" stroke-width="1.8" fill="none" />
<path d="M2467.2,1050.8 H2478.6 M2467.2,1056.6 H2474.2" stroke="#c3c4c8" stroke-width="1.7" fill="none" />
<path d="M2479.9,1059.4 A3.3,3.3 0 1 1 2484.6,1062.2 Q2483.3,1062.9 2483.3,1064.7" stroke="#c3c4c8" stroke-width="1.7" fill="none" /><circle cx="2483.3" cy="1067.6" r="1.1" fill="#c3c4c8"/></svg>
<div class="a t" style="left:2173px;width:600px;text-align:center;top:1078.0px;height:30px;line-height:30px;font-size:19.5px;color:#c6c7cb;font-weight:400;">帮助</div>
<svg class="a" style="left:2460px;top:1154px;" width="27" height="26" viewBox="2460 1154 27 26" fill="none"><path d="M2463.2,1157.6 Q2469.5,1156.2 2473,1158.6 Q2476.5,1156.2 2482.8,1157.6 V1174.4 Q2476.5,1173.2 2473,1176.2 Q2469.5,1173.2 2463.2,1174.4Z M2473,1158.6 V1176.2" stroke="#c3c4c8" stroke-width="1.8" fill="none" stroke-linejoin="round"/></svg>
<div class="a t" style="left:2173px;width:600px;text-align:center;top:1187.0px;height:30px;line-height:30px;font-size:19.5px;color:#c6c7cb;font-weight:400;">教程</div>
<svg class="a" style="left:2459px;top:1263px;" width="29" height="24" viewBox="2459 1263 29 24" fill="none"><rect x="2462.7" y="1266.9" width="21.2" height="15.8" rx="1" stroke="#c3c4c8" stroke-width="1.8" fill="none" /><path d="M2463.4,1267.8 L2473.3,1275.4 L2483.2,1267.8" stroke="#c3c4c8" stroke-width="1.8" fill="none" /></svg>
<div class="a t" style="left:2173px;width:600px;text-align:center;top:1295.0px;height:30px;line-height:30px;font-size:19.5px;color:#c6c7cb;font-weight:400;">反馈</div>
<div class="a" style="left:2460px;top:1368.5px;width:26px;height:1.5px;background:#3e4047;"></div>
<div class="a" style="left:2453.5px;top:1399.5px;width:39px;height:39px;background:#464852;border-radius:50%;"></div>
<div class="a t" style="left:2173px;width:600px;text-align:center;top:1404.0px;height:30px;line-height:30px;font-size:27px;color:#e8e8ea;font-weight:400;">?</div>
<div class="a" style="left:59px;top:1240px;width:126.5px;height:39.5px;background:#464852;border-radius:4px;"></div>
<svg class="a" style="left:76px;top:1250px;" width="22" height="22" viewBox="76 1250 22 22" fill="none"><path d="M79.4,1253 H94.6 L89.6,1260.8 V1268.8 L84.6,1266.4 V1260.8Z" stroke="#efeff1" stroke-width="1.7" fill="none" stroke-linejoin='round'/></svg>
<div class="a t" style="left:107px;top:1244.5px;height:30px;line-height:30px;font-size:19.5px;color:#f0f0f2;font-weight:500;">未筛选</div>
<div class="a" style="left:199px;top:1240px;width:126.5px;height:39.5px;background:#464852;border-radius:4px;"></div>
<svg class="a" style="left:214px;top:1249px;" width="26" height="22" viewBox="214 1249 26 22" fill="none"><path d="M216.8,1252.6 H228.4 M216.8,1260.3 H228.4 M216.8,1267.9 H228.4 M234.3,1254 V1268.2" stroke="#efeff1" stroke-width="1.7" fill="none" /><path d="M234.3,1250.8 L238.2,1256.6 H230.4Z" fill="#efeff1"/></svg>
<div class="a t" style="left:247px;top:1244.5px;height:30px;line-height:30px;font-size:19.5px;color:#f0f0f2;font-weight:500;">文件名</div>
<div class="a t" style="left:338.5px;top:1245.0px;height:30px;line-height:30px;font-size:19.5px;color:#c6c7cb;font-weight:400;">已选 1 张（共1张）</div>
<svg class="a" style="left:937.5px;top:1248px" width="22" height="24" viewBox="0 0 22 24"><rect x="0.6" y="0.2" width="1.6" height="23" fill="#4d4e55"/><rect x="1.4" y="2" width="19.2" height="13" fill="#4d4e55"/><path d="M5.6,8.2 L9.2,11.6 L16,4.8" stroke="#23242a" stroke-width="1.6" fill="none"/></svg>
<svg class="a" style="left:977px;top:1248px" width="22" height="24" viewBox="0 0 22 24"><rect x="0.6" y="0.2" width="1.6" height="23" fill="#4d4e55"/><rect x="1.4" y="2" width="19.2" height="13" fill="#4d4e55"/><path d="M7.6,4.6 L13.8,10.8 M13.8,4.6 L7.6,10.8" stroke="#23242a" stroke-width="1.5" fill="none"/></svg>
<svg class="a" style="left:1010.5px;top:1247.5px;" width="24" height="24" viewBox="-12.0 -12.0 24 24" fill="none"><polygon points="0.00,-10.40 2.82,-3.38 10.37,-2.87 4.57,1.98 6.41,9.32 0.00,5.30 -6.41,9.32 -4.57,1.98 -10.37,-2.87 -2.82,-3.38" fill="#46474d" stroke="#46474d" stroke-width="1.2" stroke-linejoin="round"/></svg>
<svg class="a" style="left:1050.0px;top:1247.5px;" width="24" height="24" viewBox="-12.0 -12.0 24 24" fill="none"><polygon points="0.00,-10.40 2.82,-3.38 10.37,-2.87 4.57,1.98 6.41,9.32 0.00,5.30 -6.41,9.32 -4.57,1.98 -10.37,-2.87 -2.82,-3.38" fill="#46474d" stroke="#46474d" stroke-width="1.2" stroke-linejoin="round"/></svg>
<svg class="a" style="left:1089.5px;top:1247.5px;" width="24" height="24" viewBox="-12.0 -12.0 24 24" fill="none"><polygon points="0.00,-10.40 2.82,-3.38 10.37,-2.87 4.57,1.98 6.41,9.32 0.00,5.30 -6.41,9.32 -4.57,1.98 -10.37,-2.87 -2.82,-3.38" fill="#46474d" stroke="#46474d" stroke-width="1.2" stroke-linejoin="round"/></svg>
<svg class="a" style="left:1129.0px;top:1247.5px;" width="24" height="24" viewBox="-12.0 -12.0 24 24" fill="none"><polygon points="0.00,-10.40 2.82,-3.38 10.37,-2.87 4.57,1.98 6.41,9.32 0.00,5.30 -6.41,9.32 -4.57,1.98 -10.37,-2.87 -2.82,-3.38" fill="#46474d" stroke="#46474d" stroke-width="1.2" stroke-linejoin="round"/></svg>
<svg class="a" style="left:1168.0px;top:1247.5px;" width="24" height="24" viewBox="-12.0 -12.0 24 24" fill="none"><polygon points="0.00,-10.40 2.82,-3.38 10.37,-2.87 4.57,1.98 6.41,9.32 0.00,5.30 -6.41,9.32 -4.57,1.98 -10.37,-2.87 -2.82,-3.38" fill="#46474d" stroke="#46474d" stroke-width="1.2" stroke-linejoin="round"/></svg>
<div class="a" style="left:1207px;top:1250px;width:21px;height:21px;border-radius:4px;background:conic-gradient(from 200deg at 55% 50%,#f5c33b,#f08a3a,#e8445a,#d946c8,#8a55e8,#3d7ff0,#35b8d8,#3bc66a,#a8d23a,#f5c33b);"></div>
<div class="a t" style="left:1238px;top:1245.0px;height:30px;line-height:30px;font-size:20px;color:#aeb0b5;font-weight:400;">老照片修复前.jpg</div>
<div class="a" style="left:62.5px;top:1302.5px;width:82px;height:112px;border-radius:4px;background:#0c0c0c;border:3px solid #fbd94a;overflow:hidden;"><svg class="a" style="left:1.5px;top:1.5px;overflow:hidden;" width="73" height="103" viewBox="36 40 631 876" preserveAspectRatio="none"><g clip-path="url(#pclip)"><rect width="705" height="943" fill="#fdfcfa"/><path d="M46,10 H701 V943 H9 L7,70 Q8,24 46,10Z" fill="#e8dfc9" filter="url(#pb1)"/><g clip-path="url(#pinner)"><rect x="20" y="20.5" width="666" height="900.5" fill="#aca394"/><g filter="url(#pb9)"><ellipse cx="400" cy="60" rx="380" ry="70" fill="#978e80" opacity="0.7"/><ellipse cx="640" cy="200" rx="60" ry="150" fill="#978e80" opacity="0.35"/><ellipse cx="60" cy="560" rx="95" ry="330" fill="#d3c7af" opacity="0.9"/><ellipse cx="40" cy="860" rx="120" ry="120" fill="#d3c7af" opacity="0.55"/><ellipse cx="70" cy="240" rx="60" ry="100" fill="#d3c7af" opacity="0.25"/></g><rect x="20" y="20.5" width="666" height="900.5" fill="url(#vign)"/><g filter="url(#pb2)"><path d="M279.0,596.0C265.2,593.5 266.3,607.0 250.0,616.0C233.7,625.0 227.8,626.5 214.0,632.0C200.2,637.5 208.5,632.0 195.0,638.0C181.5,644.0 175.5,648.0 160.0,656.0C144.5,664.0 146.3,661.7 133.0,670.0C119.7,678.3 117.3,678.5 107.0,689.0C96.7,699.5 97.3,699.2 92.0,712.0C86.7,724.8 90.0,721.7 86.0,740.0C82.0,758.3 81.0,762.5 76.0,785.0C71.0,807.5 70.0,807.5 66.0,830.0C62.0,852.5 62.3,850.0 60.0,875.0C57.7,900.0 -15.5,908.7 57.0,930.0C129.5,951.3 189.2,957.5 350.0,960.0C510.8,962.5 612.5,1005.0 700.0,940.0C787.5,875.0 703.8,761.5 700.0,700.0C696.2,638.5 692.5,698.3 685.0,694.0C677.5,689.7 679.3,690.5 670.0,683.0C660.7,675.5 659.5,672.3 648.0,664.0C636.5,655.7 638.0,659.0 624.0,650.0C610.0,641.0 608.3,637.8 592.0,628.0C575.7,618.2 574.5,617.5 559.0,611.0C543.5,604.5 544.0,605.8 530.0,602.0C516.0,598.2 518.0,589.0 503.0,596.0C488.0,603.0 490.8,615.2 470.0,630.0C449.2,644.8 445.0,647.5 420.0,655.0C395.0,662.5 390.5,661.3 370.0,660.0C349.5,658.7 354.3,658.5 338.0,650.0C321.7,641.5 319.8,639.5 305.0,626.0C290.2,612.5 292.8,598.5 279.0,596.0Z" fill="#dfd1be"/></g><g filter="url(#pb9)"><path d="M112,690 C96,750 76,840 62,921 L150,921 C150,850 146,770 168,690Z" fill="#a9a08f" opacity="0.75"/><path d="M560,780 C570,830 560,880 550,921 L600,921 C600,860 590,800 575,770Z" fill="#a9a08f" opacity="0.5"/><ellipse cx="400" cy="800" rx="160" ry="100" fill="#ebdecc" opacity="0.6"/><ellipse cx="640" cy="800" rx="50" ry="110" fill="#ebdecc" opacity="0.5"/></g><g filter="url(#pb2)" fill="none" stroke="#a9a08f" stroke-linecap="round"><path d="M121,669 C100,700 82,750 67,818 C62,850 60,880 58,915" stroke-width="8" opacity="0.85"/><path d="M107,718 C112,760 122,820 139,897" stroke-width="8" opacity="0.7"/><path d="M199,678 C170,720 140,790 132,836 C132,860 134,876 137,890" stroke-width="9" opacity="0.7"/><path d="M222,758 C196,790 160,840 146,871" stroke-width="7" opacity="0.6"/><path d="M262,670 C240,720 226,790 232,900" stroke-width="12" opacity="0.35"/><path d="M556,700 C580,760 590,830 580,910" stroke-width="10" opacity="0.4"/><path d="M600,690 C640,740 660,800 664,900" stroke-width="9" opacity="0.3"/></g><g filter="url(#pb2)"><path d="M169.0,167.0C172.0,149.7 167.7,147.0 179.0,129.0C190.3,111.0 193.2,106.5 214.0,95.0C234.8,83.5 239.7,84.8 262.0,83.0C284.3,81.2 288.0,84.2 303.0,88.0C318.0,91.8 310.7,96.7 322.0,98.0C333.3,99.3 330.2,92.0 348.0,93.0C365.8,94.0 368.7,94.7 393.0,102.0C417.3,109.3 423.5,109.2 445.0,122.0C466.5,134.8 463.5,134.0 479.0,153.0C494.5,172.0 495.7,175.5 507.0,198.0C518.3,220.5 515.5,219.7 524.0,243.0C532.5,266.3 531.5,267.7 541.0,291.0C550.5,314.3 551.5,313.5 562.0,336.0C572.5,358.5 576.0,359.5 583.0,381.0C590.0,402.5 584.5,397.0 590.0,422.0C595.5,447.0 598.5,456.5 605.0,481.0C611.5,505.5 611.2,502.2 616.0,520.0C620.8,537.8 623.0,537.0 624.0,552.0C625.0,567.0 624.0,568.0 620.0,580.0C616.0,592.0 618.3,591.2 608.0,600.0C597.7,608.8 594.0,613.5 579.0,615.0C564.0,616.5 562.8,611.8 548.0,606.0C533.2,600.2 532.0,599.0 520.0,592.0C508.0,585.0 512.5,589.8 500.0,578.0C487.5,566.2 495.0,549.5 470.0,545.0C445.0,540.5 442.5,556.2 400.0,560.0C357.5,563.8 329.0,556.2 300.0,560.0C271.0,563.8 289.5,566.0 284.0,575.0C278.5,584.0 283.5,584.7 278.0,596.0C272.5,607.3 272.5,610.7 262.0,620.0C251.5,629.3 250.3,630.5 236.0,633.0C221.7,635.5 220.3,634.8 205.0,630.0C189.7,625.2 187.8,624.0 175.0,614.0C162.2,604.0 161.5,603.5 154.0,590.0C146.5,576.5 147.8,574.3 145.0,560.0C142.2,545.7 142.2,548.5 143.0,533.0C143.8,517.5 143.7,512.8 148.0,498.0C152.3,483.2 157.7,487.0 160.0,474.0C162.3,461.0 158.3,461.5 157.0,446.0C155.7,430.5 153.7,429.0 155.0,412.0C156.3,395.0 157.7,395.3 162.0,378.0C166.3,360.7 167.2,361.3 172.0,343.0C176.8,324.7 177.5,324.8 181.0,305.0C184.5,285.2 187.8,283.0 186.0,264.0C184.2,245.0 178.8,245.5 174.0,229.0C169.2,212.5 168.3,213.5 167.0,198.0C165.7,182.5 166.0,184.3 169.0,167.0Z" fill="#242220"/></g><g filter="url(#pb4)" opacity="0.42" fill="none" stroke="#55514b"><path d="M200,200 C210,150 260,112 320,118" stroke-width="14"/><path d="M396,128 C440,150 478,200 500,260" stroke-width="13"/><path d="M524,300 C545,360 565,410 572,460" stroke-width="12"/><path d="M548,500 C584,530 602,560 590,596" stroke-width="12"/><path d="M190,330 C176,380 170,430 178,470" stroke-width="11"/><path d="M166,520 C160,560 180,600 220,618" stroke-width="11"/></g><g filter="url(#pb2)" opacity="0.38" fill="none" stroke="#55514b" stroke-linecap="round"><path d="M388,112 C340,120 270,140 214,196" stroke-width="4"/><path d="M388,132 C330,146 262,172 206,232" stroke-width="4"/><path d="M390,160 C340,170 280,196 232,236" stroke-width="3.5"/><path d="M392,190 C350,196 300,206 262,222" stroke-width="3"/><path d="M402,112 C450,128 486,170 506,226" stroke-width="4"/><path d="M404,140 C444,160 476,200 494,262" stroke-width="4"/><path d="M406,176 C436,196 462,232 480,276" stroke-width="3.5"/><path d="M508,250 C540,290 556,330 560,372" stroke-width="4"/><path d="M530,330 C548,352 574,400 582,440" stroke-width="4"/><path d="M500,440 C530,430 566,440 590,470" stroke-width="5"/><path d="M494,500 C530,486 580,500 612,540" stroke-width="5"/><path d="M520,560 C550,548 590,560 606,590" stroke-width="5"/><path d="M204,250 C196,300 186,340 170,380" stroke-width="4"/><path d="M196,330 C186,380 176,420 166,450" stroke-width="4"/><path d="M160,470 C176,460 200,470 214,500" stroke-width="5"/><path d="M150,520 C176,506 214,520 236,556" stroke-width="5"/><path d="M160,580 C190,566 230,580 254,610" stroke-width="5"/></g><g filter="url(#pb2)"><path d="M283.0,530.0C270.5,532.5 275.7,545.0 280.0,560.0C284.3,575.0 289.5,575.5 300.0,590.0C310.5,604.5 311.2,605.5 322.0,618.0C332.8,630.5 333.0,641.5 343.0,640.0C353.0,638.5 350.2,624.5 362.0,612.0C373.8,599.5 376.5,601.0 390.0,590.0C403.5,579.0 403.5,579.3 416.0,568.0C428.5,556.7 431.0,557.0 440.0,545.0C449.0,533.0 462.0,521.3 452.0,520.0C442.0,518.7 430.5,532.5 400.0,540.0C369.5,547.5 359.3,552.5 330.0,550.0C300.7,547.5 295.5,527.5 283.0,530.0Z" fill="#a89e8f"/></g><g filter="url(#pb4)"><ellipse cx="352" cy="606" rx="26" ry="26" fill="#d8cfbf" opacity="0.55"/></g><g filter="url(#pb1)"><path d="M279.0,556.0C276.2,559.3 277.0,566.0 277.0,575.0C277.0,584.0 273.2,582.7 279.0,592.0C284.8,601.3 289.2,603.0 300.0,612.0C310.8,621.0 311.2,621.0 322.0,628.0C332.8,635.0 339.5,641.5 343.0,640.0C346.5,638.5 342.3,632.0 336.0,622.0C329.7,612.0 327.0,611.0 318.0,600.0C309.0,589.0 307.5,587.5 300.0,578.0C292.5,568.5 293.3,567.5 288.0,562.0C282.7,556.5 281.8,552.7 279.0,556.0Z" fill="#a9a08f"/><path d="M464.0,519.0C472.0,518.7 471.0,531.7 478.0,545.0C485.0,558.3 485.7,559.0 492.0,572.0C498.3,585.0 504.0,585.0 503.0,597.0C502.0,609.0 498.8,608.7 488.0,620.0C477.2,631.3 478.3,632.0 460.0,642.0C441.7,652.0 435.0,657.0 415.0,660.0C395.0,663.0 396.5,659.0 380.0,654.0C363.5,649.0 356.0,648.0 349.0,640.0C342.0,632.0 348.2,630.5 352.0,622.0C355.8,613.5 355.0,614.0 364.0,606.0C373.0,598.0 376.5,597.0 388.0,590.0C399.5,583.0 400.0,584.0 410.0,578.0C420.0,572.0 419.0,574.0 428.0,566.0C437.0,558.0 437.0,557.8 446.0,546.0C455.0,534.2 456.0,519.3 464.0,519.0Z" fill="#e4dac8"/><path d="M464,519 C450,548 420,572 392,588 C370,602 354,620 349,640" stroke="#a9a08f" stroke-width="2.5" fill="none" opacity="0.7"/><path d="M503,597 C488,622 456,645 415,660 C392,662 368,652 349,640" stroke="#a9a08f" stroke-width="2.5" fill="none" opacity="0.6"/><path d="M279,592 C298,612 320,628 343,640" stroke="#ebdecc" stroke-width="3" fill="none" opacity="0.8"/></g><g filter="url(#pb1)"><path d="M338,660 C318,650 296,652 280,660 C279,670 281,682 284,690 C304,686 322,680 338,672Z M344,660 C362,650 388,644 405,643 C406,662 403,684 398,700 C380,692 360,682 344,674Z" fill="#ebdecc" stroke="#a9a08f" stroke-width="2.5"/><ellipse cx="341" cy="665" rx="9" ry="11" fill="#e4dac8" stroke="#a9a08f" stroke-width="2.5"/><path d="M224,734 C228,752 230,770 231,788 M228,732 C238,748 244,760 249,773 M214,700 L226,730 M240,694 L228,730" stroke="#ebdecc" stroke-width="5" fill="none" opacity="0.95"/><path d="M224,734 C228,752 230,770 231,788 M228,732 C238,748 244,760 249,773" stroke="#a9a08f" stroke-width="1.5" fill="none" opacity="0.8" transform="translate(3,1)"/><path d="M344,680 C320,700 280,716 240,728" stroke="#a9a08f" stroke-width="3" fill="none" opacity="0.75"/></g><g filter="url(#pb2)"><path d="M210.0,457.0C208.1,446.7 209.0,427.8 208.6,395.0C208.2,362.2 208.2,357.0 208.6,326.0C209.0,295.0 206.9,291.8 210.0,271.0C213.1,250.2 212.2,254.3 221.0,243.0C229.8,231.7 230.5,232.9 245.0,226.0C259.5,219.1 260.0,219.0 279.0,215.5C298.0,212.0 300.2,212.9 321.0,212.0C341.8,211.1 344.0,210.2 362.0,212.0C380.0,213.8 376.7,213.0 393.0,219.0C409.3,225.0 410.7,223.0 427.0,236.0C443.3,249.0 445.7,253.0 458.0,271.0C470.3,289.0 469.0,294.2 476.0,308.0C483.0,321.8 480.0,324.7 486.0,326.0C492.0,327.3 493.0,316.5 500.0,313.0C507.0,309.5 508.5,307.0 514.0,312.0C519.5,317.0 521.0,316.7 522.0,333.0C523.0,349.3 522.8,357.2 518.0,377.0C513.2,396.8 511.8,401.2 503.0,412.0C494.2,422.8 489.5,413.0 483.0,420.0C476.5,427.0 479.8,429.0 477.0,440.0C474.2,451.0 475.8,449.5 472.0,464.0C468.2,478.5 468.3,483.0 462.0,498.0C455.7,513.0 455.5,513.0 447.0,524.0C438.5,535.0 439.3,534.0 428.0,542.0C416.7,550.0 415.5,550.5 402.0,556.0C388.5,561.5 387.3,561.5 374.0,564.0C360.7,566.5 362.0,566.5 349.0,566.0C336.0,565.5 334.8,565.5 322.0,562.0C309.2,558.5 308.3,557.5 298.0,552.0C287.7,546.5 290.0,547.5 281.0,540.0C272.0,532.5 270.8,532.0 262.0,522.0C253.2,512.0 253.8,512.0 246.0,500.0C238.2,488.0 238.5,490.0 231.0,474.0C223.5,458.0 221.3,440.3 216.0,436.0C210.7,431.7 211.9,467.3 210.0,457.0Z" fill="#d8cfbf"/></g><g filter="url(#pb9)"><path d="M209,300 C206,400 226,490 290,560 C256,510 244,420 244,330Z" fill="#a89e8f" opacity="0.8"/><path d="M486,330 C486,420 466,500 410,556 C440,520 462,470 468,400Z" fill="#a89e8f" opacity="0.45"/><ellipse cx="340" cy="265" rx="100" ry="36" fill="#e9e1d2" opacity="0.9"/><ellipse cx="352" cy="410" rx="46" ry="60" fill="#e9e1d2" opacity="0.75"/><ellipse cx="440" cy="420" rx="30" ry="50" fill="#e9e1d2" opacity="0.45"/><ellipse cx="350" cy="540" rx="34" ry="14" fill="#e9e1d2" opacity="0.6"/></g><g filter="url(#pb4)"><path d="M300,350 C292,390 288,420 292,446" stroke="#a89e8f" stroke-width="16" fill="none" opacity="0.7"/><ellipse cx="262" cy="340" rx="36" ry="14" fill="#a89e8f" opacity="0.45"/><ellipse cx="400" cy="336" rx="40" ry="13" fill="#a89e8f" opacity="0.35"/><ellipse cx="334" cy="524" rx="30" ry="7" fill="#a89e8f" opacity="0.6"/><path d="M494,330 C504,350 504,380 494,404" stroke="#a89e8f" stroke-width="7" fill="none" opacity="0.6"/></g><g filter="url(#pb4)"><path d="M214,330 C210,400 224,470 262,524 C244,470 236,400 240,340Z" fill="#a89e8f" opacity="0.55"/><path d="M236,470 C250,510 276,540 310,560 C290,530 270,500 262,470Z" fill="#a89e8f" opacity="0.45"/><ellipse cx="266" cy="334" rx="34" ry="10" fill="#a89e8f" opacity="0.45"/><ellipse cx="398" cy="330" rx="38" ry="10" fill="#a89e8f" opacity="0.35"/><path d="M333,455 L334,476" stroke="#a89e8f" stroke-width="8" opacity="0.45"/><ellipse cx="326" cy="405" rx="10" ry="34" fill="#e9e1d2" opacity="0.7"/><ellipse cx="416" cy="420" rx="26" ry="30" fill="#e9e1d2" opacity="0.4"/></g><g filter="url(#pb1)"><path d="M221,324 C236,312 256,308 276,311 C286,313 294,317 301,323 C280,318 248,317 221,324Z" fill="#4a4540" stroke="#4a4540" stroke-width="3.5" stroke-linejoin="round" opacity="0.9"/><path d="M361,318 C380,306 400,302 418,304 C432,307 442,312 449,319 C424,311 392,311 361,318Z" fill="#4a4540" stroke="#4a4540" stroke-width="3.5" stroke-linejoin="round" opacity="0.9"/><path d="M242,358 C254,347 280,346 294,360 C280,365 256,365 242,358Z" fill="#a89e8f" opacity="0.9"/><path d="M368,354 C382,343 408,341 424,350 C408,360 384,360 368,354Z" fill="#a89e8f" opacity="0.9"/><ellipse cx="270" cy="355" rx="10.5" ry="8.5" fill="#3a3531"/><ellipse cx="395" cy="350" rx="10.5" ry="8.5" fill="#3a3531"/><path d="M236,358 C252,340 282,340 298,361" stroke="#2a2725" stroke-width="4" fill="none"/><path d="M363,354 C380,336 410,334 430,348" stroke="#2a2725" stroke-width="4" fill="none"/><path d="M244,362 C258,368 280,368 294,362 M370,358 C386,364 408,362 422,354" stroke="#4a4540" stroke-width="1.6" fill="none" opacity="0.7"/><path d="M298,436 C300,448 312,450 322,446 C332,452 346,450 356,438" stroke="#4a4540" stroke-width="3.5" fill="none" opacity="0.75"/><ellipse cx="311" cy="442" rx="7" ry="4" fill="#2a2725" opacity="0.85"/><ellipse cx="344" cy="440" rx="7" ry="4" fill="#2a2725" opacity="0.8"/><path d="M295,489 C310,479 322,474 333,480 C344,474 358,478 376,488 C356,496 316,497 295,489Z" fill="#5a524d"/><path d="M299,491 C316,515 356,515 373,490 C350,497 320,498 299,491Z" fill="#8a7f76"/><path d="M297,489 C320,495 350,495 375,488" stroke="#5a524d" stroke-width="2.5" fill="none"/></g></g><g stroke="#f8f3e8" fill="none" stroke-linecap="round" opacity="0.8"><path d="M8,498 C120,530 220,590 330,640 C450,690 580,760 704,796" stroke-width="5"/><path d="M24,190 C80,130 150,60 210,20" stroke-width="5"/><path d="M486,20 C500,80 540,110 600,140" stroke-width="3"/></g></g></svg><div class="a" style="left:1.5px;top:2px;width:27px;height:27px;background:#fbd94a;"></div><svg class="a" style="left:6px;top:6.5px" width="18" height="18" viewBox="0 0 18 18"><path d="M3.2,12.4 L11.4,4.2 Q12.6,3 13.9,4.2 Q15.1,5.5 13.9,6.7 L5.7,14.9 L2.9,15.2 Z" stroke="#1a1a1a" stroke-width="1.5" fill="none" stroke-linejoin="round"/></svg><div class="a" style="left:1.5px;top:77.5px;width:27px;height:27px;background:rgba(72,70,68,.82);"></div><div class="a t" style="left:1.5px;top:77.5px;width:27px;height:27px;line-height:28px;text-align:center;font-size:19px;color:#fff;">1</div></div>
</div></body></html>
